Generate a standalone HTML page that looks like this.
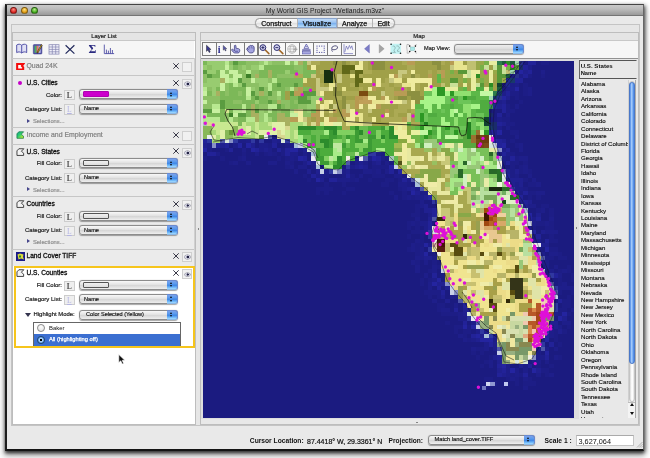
<!DOCTYPE html>
<html><head><meta charset="utf-8"><title>My World GIS</title><style>
*{box-sizing:border-box;margin:0;padding:0}
html,body{width:650px;height:458px;overflow:hidden;background:#fff}
body{will-change:transform;font-family:"Liberation Sans",sans-serif;font-size:7px;color:#111;position:relative}
.a{position:absolute}
.t{position:absolute;white-space:nowrap;line-height:1}
#win{left:5.3px;top:4px;width:638.7px;height:447px;background:#e9e9e9;border-left:2px solid #1e1e1e;border-right:1px solid #666;border-bottom:2.4px solid #141414;border-top:1px solid #444;box-shadow:0 2px 3px rgba(0,0,0,.6),0 4px 6px 1px rgba(0,0,0,.35),2px 1px 4px rgba(0,0,0,.3)}
#tb{left:7px;top:5px;width:636px;height:11px;background:linear-gradient(#cacaca,#bcbcbc 40%,#999);border-bottom:1px solid #747474}
.lt{position:absolute;top:7px;width:7px;height:7px;border-radius:50%;border:.5px solid rgba(0,0,0,.45)}
.sep{position:absolute;left:12px;width:183px;height:1px;background:#c6c6c6}
.lab{position:absolute;white-space:nowrap;line-height:1;font-size:6px;-webkit-text-stroke:.2px #222;color:#222;text-align:right;width:60px;left:2px}
.ttl{position:absolute;white-space:nowrap;line-height:1;font-size:6.6px;left:26.5px;color:#111;-webkit-text-stroke:.3px #111}
.ttlg{position:absolute;white-space:nowrap;line-height:1;font-size:6.9px;left:26.5px;color:#808080;-webkit-text-stroke:.2px #808080}
.lb{position:absolute;left:64.2px;width:10.4px;height:10.4px;background:#efefef;border:1px solid #cdcdcd;font-family:"Liberation Serif",serif;font-weight:bold;font-size:7.6px;line-height:9.4px;text-align:center;color:#505050}
.lb.dim{color:#b4b4e4;text-decoration:underline;font-weight:normal}
.dd{position:absolute;left:79px;width:99px;height:10px;border-radius:3px;border:1px solid #8c8c8c;background:linear-gradient(#f8f8f8,#e0e0e0 50%,#d6d6d6 55%,#eee);box-shadow:0 .5px 1px rgba(0,0,0,.35)}
.dd i{position:absolute;right:-1px;top:-1px;width:11px;height:10px;border-radius:0 3px 3px 0;background:linear-gradient(#7aa2ea,#5e9cee 30%,#4088e6 55%,#74bcfa 82%,#a4dcff);border:1px solid #6a8ad0;border-bottom-color:#8ab8e8;border-left:0}
.dd i:before{content:"";position:absolute;left:3.2px;top:1.4px;border:1.8px solid transparent;border-top:0;border-bottom:2.3px solid #0a0a0a}
.dd i:after{content:"";position:absolute;left:3.2px;top:4.7px;border:1.8px solid transparent;border-bottom:0;border-top:2.3px solid #0a0a0a}
.dd span{position:absolute;left:4px;top:1.6px;font-size:5.6px;-webkit-text-stroke:.15px #111;line-height:1;white-space:nowrap;color:#111}
.sw{position:absolute;left:3.3px;top:1.2px;width:25.3px;height:5.9px;border:1px solid #555;border-radius:1px;background:linear-gradient(#f0f0f0,#ddd)}
.sel{position:absolute;left:33px;font-size:5.8px;line-height:1;color:#909090;-webkit-text-stroke:.2px #909090;white-space:nowrap}
.tri{position:absolute;left:26.6px;width:0;height:0;border:2.9px solid transparent;border-right:0;border-left:3.8px solid #44448a}
.x{position:absolute;left:173px;width:6px;height:6px}
.cb{position:absolute;left:182px;width:10px;height:10px;background:#f1f1f1;border:1px solid #cfcfcf}
.eye{position:absolute;left:1.6px;top:2.4px;width:5.4px;height:3.6px;border-radius:50%;background:radial-gradient(circle at 55% 50%,#224 0,#224 28%,#99a 36%,#dde 60%);box-shadow:0 0 0 .5px #778}
.st{position:absolute;left:581px;font-size:6.1px;line-height:1;white-space:nowrap;color:#111;-webkit-text-stroke:.15px #111}
.tbt{position:absolute;top:42.2px;width:14.95px;height:13.6px;border:1px solid #7c7c7c;background:#f8f8f8}
</style></head><body>
<div class="a" id="win"></div><div class="a" id="tb"></div>
<div class="lt" style="left:10.3px;background:radial-gradient(circle at 50% 30%,#ff8a80,#d8201c 70%)"></div>
<div class="lt" style="left:20.8px;background:radial-gradient(circle at 50% 30%,#ffe27a,#e09a10 70%)"></div>
<div class="lt" style="left:31.2px;background:radial-gradient(circle at 50% 30%,#b6ee8a,#3ea818 70%)"></div>
<div class="t" style="left:0;width:650px;text-align:center;top:7.6px;font-size:6.8px;color:#222">My World GIS Project "Wetlands.m3vz"</div>
<div class="a" style="left:11px;top:24px;width:629px;height:402px;border:1px solid #c4c4c4;background:#e6e6e6"></div>
<div class="a" style="left:255px;top:18.1px;width:140px;height:9.6px;border-radius:4.5px;border:1px solid #989898;background:linear-gradient(#fcfcfc,#ececec 50%,#e0e0e0 55%,#f4f4f4);box-shadow:0 .5px 1px rgba(0,0,0,.3)"></div>
<div class="a" style="left:297px;top:18.1px;width:40px;height:9.6px;border:1px solid #8aa4cc;border-left-color:#90a8d0;border-right-color:#90a8d0;background:linear-gradient(#c2dcf8,#92bef0 50%,#7ab0ee 55%,#b4dcfc)"></div>
<div class="a" style="left:296.5px;top:19.1px;width:1px;height:7.6px;background:#b4b4b4"></div>
<div class="a" style="left:336.5px;top:19.1px;width:1px;height:7.6px;background:#b4b4b4"></div>
<div class="a" style="left:371.5px;top:19.1px;width:1px;height:7.6px;background:#b4b4b4"></div>
<div class="t" style="left:246.39999999999998px;width:60px;text-align:center;top:20.6px;font-size:7.1px;-webkit-text-stroke:.25px #111;color:#111">Construct</div>
<div class="t" style="left:287px;width:60px;text-align:center;top:20.6px;font-size:7.1px;-webkit-text-stroke:.25px #111;color:#111">Visualize</div>
<div class="t" style="left:324.6px;width:60px;text-align:center;top:20.6px;font-size:7.1px;-webkit-text-stroke:.25px #111;color:#111">Analyze</div>
<div class="t" style="left:353.5px;width:60px;text-align:center;top:20.6px;font-size:7.1px;-webkit-text-stroke:.25px #111;color:#111">Edit</div>
<div class="a" style="left:12px;top:32px;width:184px;height:393px;border:1px solid #bdbdbd;background:#fff"></div>
<div class="a" style="left:13px;top:33px;width:182px;height:7.5px;background:#e4e4e4;border-bottom:1px solid #c8c8c8"></div>
<div class="t" style="left:13px;width:182px;text-align:center;top:34px;font-size:5.9px;-webkit-text-stroke:.2px #222;color:#222">Layer List</div>
<div class="a" style="left:13px;top:40.5px;width:181px;height:17px;background:#f6f6f6"></div>
<div class="a" style="left:200px;top:32px;width:439px;height:393px;border:1px solid #bdbdbd;background:#e8e8e8"></div>
<div class="a" style="left:201px;top:33px;width:437px;height:7.5px;background:#e4e4e4;border-bottom:1px solid #c8c8c8"></div>
<div class="t" style="left:389px;width:60px;text-align:center;top:34px;font-size:5.9px;-webkit-text-stroke:.2px #222;color:#222">Map</div>
<div class="a" style="left:201px;top:40.5px;width:437px;height:17px;background:#f6f6f6"></div>
<svg class="a" style="left:14px;top:42px;width:110px;height:15px" viewBox="0 0 110 15">
<g fill="#e0e0f4" stroke="#4444a0" stroke-width=".9">
<path d="M2.700 3C4.200 1.900 6.200 1.900 7.700 3.300 9.200 1.900 11.200 1.900 12.700 3V10.600C11.200 9.600 9.200 9.600 7.700 11 6.200 9.600 4.200 9.600 2.700 10.600Z"/><path d="M7.700 3.300V11"/>
</g>
<rect x="19.300" y="2.600" width="8.600" height="9.400" rx=".8" fill="#5454ac" stroke="#33337a" stroke-width=".5"/><rect x="20.600" y="3.800" width="2" height="7" fill="#48b060"/><rect x="22.600" y="3.800" width="2" height="7" fill="#e87860"/><rect x="24.600" y="3.800" width="2" height="7" fill="#c8c8f0"/><path d="M27.200 2.600 23.400 9.800 23 11.200 24.300 10.400 28.200 3.300Z" fill="#f0c020" stroke="#111" stroke-width=".55"/>
<g stroke="#8484b0" stroke-width=".7" fill="#f0f0fa"><rect x="35" y="2.700" width="10" height="9.400"/><path d="M35 5h10M35 7.400h10M35 9.800h10M38.300 2.700v9.400M41.700 2.700v9.400" fill="none"/></g>
<path d="M51.600 3.200 60.400 11.600M60.400 3.200 51.600 11.600" stroke="#222a5c" stroke-width="1.200" fill="none"/>
<g stroke="#4444a0" stroke-width=".85" fill="none"><path d="M90.300 2.600v9h9.800M92.400 11.600v-4M94.400 11.600v-3M96.400 11.600v-5.600M98.400 11.600v-3.600"/></g>
<text x="74.600" y="11" font-family="Liberation Serif,serif" font-weight="bold" font-size="12" fill="#2a2a80">Σ</text>
</svg>
<div class="a" style="left:13px;top:58px;width:181px;height:208px;background:#ebebeb"></div>
<div class="sep" style="top:57.5px"></div>
<div class="sep" style="top:75.3px"></div>
<div class="sep" style="top:127.3px"></div>
<div class="sep" style="top:144px"></div>
<div class="sep" style="top:196.4px"></div>
<div class="sep" style="top:248.5px"></div>
<div class="a" style="left:194px;top:58px;width:1px;height:290px;background:#d0d0d0"></div>
<svg class="a" style="left:16px;top:62.6px;width:8.500px;height:7.500px" viewBox="0 0 9 8"><path d="M1.200 1H7.800L6.300 3.100 7.600 4.600V7H1.200Z" fill="#fff" stroke="#f40c0c" stroke-width="2.200"/></svg>
<div class="ttlg" style="top:62.6px">Quad 24K</div>
<svg class="x" style="top:63px" viewBox="0 0 6 6"><path d="M.3.3 5.7 5.7M5.7.3.3 5.7" stroke="#223" stroke-width=".9" fill="none"/></svg>
<div class="cb" style="top:62px"></div>
<div class="a" style="left:18px;top:80.800px;width:4px;height:4px;border-radius:50%;background:#c400c8"></div>
<div class="ttl" style="top:80.3px">U.S. Cities</div>
<svg class="x" style="top:80px" viewBox="0 0 6 6"><path d="M.3.3 5.7 5.7M5.7.3.3 5.7" stroke="#223" stroke-width=".9" fill="none"/></svg>
<div class="cb" style="top:79px"><b class=eye></b></div>
<div class="lab" style="top:92px">Color:</div>
<div class="lb" style="top:90px">L</div>
<div class="dd" style="top:89.3px;left:79px;width:99px"><b class="sw" style="background:#cc00cc;border-color:#b000b0"></b><i></i></div>
<div class="lab" style="top:106.400px">Category List:</div>
<div class="lb dim" style="top:104.3px">L</div>
<div class="dd" style="top:103.8px;left:79px;width:99px"><span style="left:4px">Name</span><i></i></div>
<div class="tri" style="top:118.6px"></div><div class="sel" style="top:119px">Selections...</div>
<svg class="a" style="left:16.400px;top:131.400px;width:8.400px;height:8px" viewBox="0 0 9 8.5"><defs><linearGradient id="gi" x1="0" y1="0" x2="1" y2="1"><stop offset="0" stop-color="#10a090"/><stop offset=".45" stop-color="#30d070"/><stop offset="1" stop-color="#e8f020"/></linearGradient></defs><path d="M3 .8H8.200L5.600 3.400 8 5.400V7.800H1V3Z" fill="url(#gi)" stroke="#187848" stroke-width=".8" stroke-linejoin="round"/></svg>
<div class="ttlg" style="top:132.200px">Income and Employment</div>
<svg class="x" style="top:131.5px" viewBox="0 0 6 6"><path d="M.3.3 5.7 5.7M5.7.3.3 5.7" stroke="#223" stroke-width=".9" fill="none"/></svg>
<div class="cb" style="top:130.5px"></div>
<svg class="a" style="left:16.200px;top:147.9px;width:8.600px;height:8.100px" viewBox="0 0 9 8.5"><path d="M3 .8H8.200L5.600 3.400 8 5.400V7.800H1V3Z" fill="#f4f4f4" stroke="#333" stroke-width=".95" stroke-linejoin="round"/></svg>
<div class="ttl" style="top:148.6px">U.S. States</div>
<svg class="x" style="top:148.2px" viewBox="0 0 6 6"><path d="M.3.3 5.7 5.7M5.7.3.3 5.7" stroke="#223" stroke-width=".9" fill="none"/></svg>
<div class="cb" style="top:147.89999999999998px"><b class=eye></b></div>
<div class="lab" style="top:160.39999999999998px">Fill Color:</div>
<div class="lb" style="top:159.0px">L</div>
<div class="dd" style="top:158.3px;left:79px;width:99px"><b class="sw"></b><i></i></div>
<div class="lab" style="top:174.7px">Category List:</div>
<div class="lb" style="top:173.1px">L</div>
<div class="dd" style="top:172.6px;left:79px;width:99px"><span style="left:4px">Name</span><i></i></div>
<div class="tri" style="top:187.2px"></div><div class="sel" style="top:187.6px">Selections...</div>
<svg class="a" style="left:16.200px;top:200.4px;width:8.600px;height:8.100px" viewBox="0 0 9 8.5"><path d="M3 .8H8.200L5.600 3.400 8 5.400V7.800H1V3Z" fill="#f4f4f4" stroke="#333" stroke-width=".95" stroke-linejoin="round"/></svg>
<div class="ttl" style="top:201.1px">Countries</div>
<svg class="x" style="top:200.7px" viewBox="0 0 6 6"><path d="M.3.3 5.7 5.7M5.7.3.3 5.7" stroke="#223" stroke-width=".9" fill="none"/></svg>
<div class="cb" style="top:200.39999999999998px"><b class=eye></b></div>
<div class="lab" style="top:212.89999999999998px">Fill Color:</div>
<div class="lb" style="top:211.5px">L</div>
<div class="dd" style="top:210.8px;left:79px;width:99px"><b class="sw"></b><i></i></div>
<div class="lab" style="top:227.2px">Category List:</div>
<div class="lb dim" style="top:225.6px">L</div>
<div class="dd" style="top:225.1px;left:79px;width:99px"><span style="left:4px">Name</span><i></i></div>
<div class="tri" style="top:239.4px"></div><div class="sel" style="top:239.8px">Selections...</div>
<svg class="a" style="left:16px;top:251.5px;width:9px;height:9px" viewBox="0 0 9 9"><rect width="9" height="9" fill="#1a1a88"/><path d="M1.5 2.5 4 1.5 7.5 2.5 7 5 8 7.5 5 6.5 2.5 7.5Z" fill="#d8d840"/><path d="M3 3.5h2v2H3z" fill="#2a8a2a"/></svg>
<div class="ttl" style="top:252.8px">Land Cover TIFF</div>
<svg class="x" style="top:252.5px" viewBox="0 0 6 6"><path d="M.3.3 5.7 5.7M5.7.3.3 5.7" stroke="#223" stroke-width=".9" fill="none"/></svg>
<div class="cb" style="top:252px"><b class=eye></b></div>
<div class="a" style="left:13.5px;top:266px;width:181px;height:82px;border:2px solid #f6c51c;background:#fff"></div>
<svg class="a" style="left:16.200px;top:269.4px;width:8.600px;height:8.100px" viewBox="0 0 9 8.5"><path d="M3 .8H8.200L5.600 3.400 8 5.400V7.800H1V3Z" fill="#f4f4f4" stroke="#333" stroke-width=".95" stroke-linejoin="round"/></svg>
<div class="ttl" style="top:270.09999999999997px">U.S. Counties</div>
<svg class="x" style="top:269.7px" viewBox="0 0 6 6"><path d="M.3.3 5.7 5.7M5.7.3.3 5.7" stroke="#223" stroke-width=".9" fill="none"/></svg>
<div class="cb" style="top:269.4px"><b class=eye></b></div>
<div class="lab" style="top:281.9px">Fill Color:</div>
<div class="lb" style="top:280.5px">L</div>
<div class="dd" style="top:279.8px;left:79px;width:99px"><b class="sw"></b><i></i></div>
<div class="lab" style="top:296.2px">Category List:</div>
<div class="lb dim" style="top:294.59999999999997px">L</div>
<div class="dd" style="top:294.1px;left:79px;width:99px"><span style="left:4px">Name</span><i></i></div>
<div class="a" style="left:25.2px;top:313.400px;width:0;height:0;border:3.2px solid transparent;border-bottom:0;border-top:4px solid #34344e"></div>
<div class="t" style="left:33.5px;top:312.4px;font-size:5.95px;-webkit-text-stroke:.2px #222;color:#222">Highlight Mode:</div>
<div class="dd" style="top:309.7px;left:79px;width:99px"><span style="left:6px">Color Selected (Yellow)</span><i></i></div>
<div class="a" style="left:33px;top:322px;width:148px;height:24px;border:1px solid #666;background:#fff"></div>
<div class="a" style="left:34px;top:334px;width:146px;height:11.5px;background:#3b6fd1"></div>
<div class="a" style="left:37.3px;top:324.2px;width:7.8px;height:7.8px;border-radius:50%;border:1px solid #888;background:radial-gradient(circle at 50% 30%,#fff,#ddd)"></div>
<div class="a" style="left:37.3px;top:335.8px;width:7.8px;height:7.8px;border-radius:50%;border:1px solid #246;background:radial-gradient(circle at 50% 50%,#000 0,#000 22%,#bfe0ff 30%,#5a9ae8 70%)"></div>
<div class="t" style="left:49px;top:325.6px;font-size:5.9px;color:#111">Baker</div>
<div class="t" style="left:49px;top:337.2px;font-size:5.75px;color:#fff;-webkit-text-stroke:.25px #fff">All (highlighting off)</div>
<svg class="a" style="left:118px;top:354px;width:8px;height:11px" viewBox="0 0 8 11"><path d="M.8.5V8.6L2.8 6.8 4.2 10 5.6 9.4 4.2 6.3H6.8Z" fill="#111" stroke="#fff" stroke-width=".6"/></svg>
<div class="a" style="left:197.5px;top:228px;width:0;height:0;border:1.3px solid transparent;border-left:1.8px solid #222"></div>
<div class="tbt" style="left:201.70px"></div>
<div class="tbt" style="left:215.65px"></div>
<div class="tbt" style="left:229.60px"></div>
<div class="tbt" style="left:243.55px"></div>
<div class="tbt" style="left:257.50px"></div>
<div class="tbt" style="left:271.45px"></div>
<div class="tbt" style="left:285.40px"></div>
<div class="tbt" style="left:299.35px"></div>
<div class="tbt" style="left:313.30px"></div>
<div class="tbt" style="left:327.25px"></div>
<div class="tbt" style="left:341.20px"></div>
<svg class="a" style="left:0;top:0;width:650px;height:458px" viewBox="0 0 650 458">
<path transform="translate(206.5 45.2) scale(0.88)" d="M0 0V7L1.7 5.4 3 8.2 4.2 7.7 3 5H5.2Z" fill="#3c3c94" stroke="#111" stroke-width=".5"/>
<text x="217.84999999999997" y="53.4" font-family="Liberation Serif,serif" font-weight="bold" font-size="10" fill="#2a2a90">i</text>
<path transform="translate(223.24999999999997 45.4) scale(0.68)" d="M0 0V7L1.7 5.4 3 8.2 4.2 7.7 3 5H5.2Z" fill="#5a5ab0" stroke="#111" stroke-width=".5"/>
<path d="M234.4 45.6q.8-.8 1.600 0v2.600l2.600.5q1.200.3 1.200 1.500l-.3 1.600q-.3 1.200-1.600 1.200h-2.800q-1.200 0-1.900-.9l-1.500-1.900q-.3-.9.6-1 .9 0 1.500.9l.6.7z" fill="#a4a4e0" stroke="#383878" stroke-width=".7"/><path d="M235 51.300h3" stroke="#383878" stroke-width=".6"/>
<path d="M247.400 48.800q-.1-1.500 1-1.500.1-1.500 1.400-1.300.5-1.200 1.700-.5 1.200-.6 1.700.7 1-.1 1 1.200v2.600q0 1.600-1 2.400-1 .7-2.400.6-1.600-.1-2.500-1.300l-1.600-2.300q-.2-.8.5-.9.600 0 1.200.8z" fill="#a4a4e0" stroke="#383878" stroke-width=".7"/><path d="M249.6 46.600v2M251.400 46v2.400M253 46.800v2" stroke="#50508c" stroke-width=".5"/>
<path d="M265.3 50 268.9 53.6" stroke="#a06828" stroke-width="1.6" stroke-linecap="round"/>
<circle cx="262.9" cy="47.6" r="2.9" fill="#d0d0ec" stroke="#2c2c70" stroke-width="1"/>
<path d="M261.4 47.6h3M262.9 46.100v3" stroke="#222260" stroke-width=".9"/>
<path d="M279.25 50 282.84999999999997 53.6" stroke="#a06828" stroke-width="1.6" stroke-linecap="round"/>
<circle cx="276.84999999999997" cy="47.6" r="2.9" fill="#d0d0ec" stroke="#2c2c70" stroke-width="1"/>
<path d="M275.34999999999997 47.6h3" stroke="#222260" stroke-width=".9"/>
<g fill="none" stroke="#b0b0b0" stroke-width=".7"><circle cx="292.0" cy="49" r="4.3"/><ellipse cx="292.0" cy="49" rx="2" ry="4.3"/><path d="M287.7 49h8.600M288.4 46.600h7.200M288.4 51.400h7.200"/></g><path d="M293.4 49.300h4M295.4 47.300v4" stroke="#a0a0a0" stroke-width="1"/>
<path d="M306.34999999999997 44 308.74999999999994 48.400H303.95Z" fill="#e8e8f8" stroke="#4a4aa0" stroke-width=".7"/><path d="M305.34999999999997 46.600h2" stroke="#4a4aa0" stroke-width=".6"/><rect x="302.15" y="49.400" width="8.400" height="1.300" fill="#4a4aa0"/><rect x="302.34999999999997" y="51.600" width="8" height="2.400" fill="#a8a8e0" stroke="#4a4aa0" stroke-width=".5"/>
<rect x="316.5" y="45.6" width="1" height="1" fill="#3c3c94"/><rect x="316.5" y="51.9" width="1" height="1" fill="#3c3c94"/><rect x="318.9" y="45.6" width="1" height="1" fill="#3c3c94"/><rect x="318.9" y="51.9" width="1" height="1" fill="#3c3c94"/><rect x="321.3" y="45.6" width="1" height="1" fill="#3c3c94"/><rect x="321.3" y="51.9" width="1" height="1" fill="#3c3c94"/><rect x="323.7" y="45.6" width="1" height="1" fill="#3c3c94"/><rect x="323.7" y="51.9" width="1" height="1" fill="#3c3c94"/><rect x="316.5" y="47.7" width="1" height="1" fill="#3c3c94"/><rect x="323.7" y="47.7" width="1" height="1" fill="#3c3c94"/><rect x="316.5" y="49.8" width="1" height="1" fill="#3c3c94"/><rect x="323.7" y="49.8" width="1" height="1" fill="#3c3c94"/>
<g fill="none" stroke="#2c2c60" stroke-width=".7"><ellipse cx="334.65" cy="47.800" rx="3" ry="1.900" transform="rotate(-15 334.65 47.800)"/><path d="M332.05 48.800q-.9 1.500.5 2.900"/></g>
<g fill="none" stroke="#6a6ab4" stroke-width=".7"><path d="M344.0 44.200v9.400h9"/><path d="M344.8 52 346.4 46 347.8 49.400 349.4 45.400 350.59999999999997 48.400 351.8 45.800 352.8 50"/></g>
<path d="M369.4 44.600V53L364.500 48.800Z" fill="#7c7cc6" stroke="#5a5aac" stroke-width=".4"/>
<path d="M379.2 44.600V53L384.200 48.800Z" fill="#a4a4a4" stroke="#8c8c8c" stroke-width=".4"/>
<rect x="390.6" y="43.800" width="10.400" height="10" fill="#c2f3f3"/><g fill="none" stroke="#7a9c9c" stroke-width=".6"><path d="M392.600 46.200q1.600-.8 2.400.6t-.6 2.600q-1 1.400.4 2.600M396.400 46q2-.6 2.800 1t-.8 2.200q-1.400.4-.8 2.200h1.800M392.400 52.400h3.400"/></g><g fill="#111"><circle cx="391.100" cy="44.300" r=".8"/><circle cx="400.500" cy="44.300" r=".8"/><circle cx="391.100" cy="53.300" r=".8"/><circle cx="400.500" cy="53.300" r=".8"/></g>
<g fill="none" stroke="#9a9a9a" stroke-width=".6"><path d="M407 44.400q2.600-.6 2.600 1.600M407 44.400q-.6 2.600 0 5.200t0 3.600M407 53.200q2.600.6 2.600-1.600M416.400 44 415.400 46M416.400 53.600 415.400 51.600"/></g><rect x="410.500" y="47" width="4.100" height="3.500" fill="#a8e8e8" stroke="#78b0b0" stroke-width=".4"/><g fill="#111"><circle cx="409.700" cy="46.100" r=".8"/><circle cx="415.400" cy="46.100" r=".8"/><circle cx="409.700" cy="51.500" r=".8"/><circle cx="415.400" cy="51.500" r=".8"/></g>
</svg>
<div class="t" style="left:424px;top:46px;font-size:5.6px;-webkit-text-stroke:.2px #222;color:#222">Map View:</div>
<div class="dd" style="top:43.8px;left:453.5px;width:70px;height:10.5px;background:linear-gradient(#eee,#dcdcdc 50%,#d4d4d4 55%,#e6e6e6)"><i></i></div>
<div class="a" style="left:201px;top:57.6px;width:437px;height:1.3px;background:#929292"></div>
<div class="a" style="left:201px;top:58.9px;width:378px;height:360px;background:#dedede"></div>
<svg class="a" style="left:0;top:0;width:650px;height:458px" viewBox="0 0 650 458" shape-rendering="crispEdges">
<rect x="203.0" y="61.0" width="371.0" height="356.5" fill="#1b1b80"/>
<path fill="#7cb858" d="M203 61h4v4h-4zM238 61h4v4h-4zM242 61h4v4h-4zM303 61h4v4h-4zM233 65h5v5h-5zM264 65h4v5h-4zM268 65h4v5h-4zM272 65h5v5h-5zM277 65h4v5h-4zM281 65h4v5h-4zM285 65h5v5h-5zM290 65h4v5h-4zM303 65h4v5h-4zM216 70h4v4h-4zM259 70h5v4h-5zM264 70h4v4h-4zM272 70h5v4h-5zM277 70h4v4h-4zM281 70h4v4h-4zM290 70h4v4h-4zM294 70h4v4h-4zM303 70h4v4h-4zM307 70h4v4h-4zM311 70h5v4h-5zM212 74h4v4h-4zM216 74h4v4h-4zM259 74h5v4h-5zM264 74h4v4h-4zM272 74h5v4h-5zM303 74h4v4h-4zM307 74h4v4h-4zM277 78h4v5h-4zM281 78h4v5h-4zM285 78h5v5h-5zM290 78h4v5h-4zM294 78h4v5h-4zM298 78h5v5h-5zM229 83h4v4h-4zM272 83h5v4h-5zM281 83h4v4h-4zM285 83h5v4h-5zM290 83h4v4h-4zM298 83h5v4h-5zM216 87h4v4h-4zM229 87h4v4h-4zM233 87h5v4h-5zM238 87h4v4h-4zM242 87h4v4h-4zM272 87h5v4h-5zM277 87h4v4h-4zM281 87h4v4h-4zM303 87h4v4h-4zM307 87h4v4h-4zM207 91h5v5h-5zM220 91h5v5h-5zM229 91h4v5h-4zM233 91h5v5h-5zM242 91h4v5h-4zM281 91h4v5h-4zM220 96h5v4h-5zM225 96h4v4h-4zM229 96h4v4h-4zM233 96h5v4h-5zM238 96h4v4h-4zM242 96h4v4h-4zM251 96h4v4h-4zM259 96h5v4h-5zM264 96h4v4h-4zM281 96h4v4h-4zM290 96h4v4h-4zM294 96h4v4h-4zM307 96h4v4h-4zM225 100h4v4h-4zM229 100h4v4h-4zM242 100h4v4h-4zM246 100h5v4h-5zM251 100h4v4h-4zM259 100h5v4h-5zM264 100h4v4h-4zM272 100h5v4h-5zM290 100h4v4h-4zM225 104h4v5h-4zM229 104h4v5h-4zM233 104h5v5h-5zM238 104h4v5h-4zM246 104h5v5h-5zM255 104h4v5h-4zM281 104h4v5h-4zM290 104h4v5h-4zM294 104h4v5h-4zM220 109h5v4h-5zM229 109h4v4h-4zM246 109h5v4h-5zM272 109h5v4h-5zM281 109h4v4h-4zM285 109h5v4h-5zM311 109h5v4h-5zM207 113h5v4h-5zM212 113h4v4h-4zM216 113h4v4h-4zM220 113h5v4h-5zM246 113h5v4h-5zM268 113h4v4h-4zM272 113h5v4h-5zM285 113h5v4h-5zM220 117h5v5h-5zM238 117h4v5h-4zM242 117h4v5h-4zM272 117h5v5h-5zM238 122h4v4h-4z"/>
<path fill="#98cc70" d="M207 61h5v4h-5zM212 61h4v4h-4zM216 61h4v4h-4zM220 61h5v4h-5zM259 61h5v4h-5zM268 61h4v4h-4zM203 65h4v5h-4zM212 65h4v5h-4zM216 65h4v5h-4zM220 65h5v5h-5zM229 65h4v5h-4zM242 65h4v5h-4zM251 65h4v5h-4zM255 65h4v5h-4zM207 70h5v4h-5zM212 70h4v4h-4zM285 70h5v4h-5zM207 78h5v5h-5zM212 78h4v5h-4zM216 78h4v5h-4zM255 78h4v5h-4zM259 78h5v5h-5zM264 78h4v5h-4zM203 83h4v4h-4zM207 83h5v4h-5zM212 83h4v4h-4zM216 83h4v4h-4zM238 83h4v4h-4zM259 83h5v4h-5zM264 83h4v4h-4zM212 87h4v4h-4zM251 87h4v4h-4zM212 91h4v5h-4zM277 96h4v4h-4zM311 96h5v4h-5zM316 96h4v4h-4zM320 96h4v4h-4zM255 100h4v4h-4zM311 100h5v4h-5zM307 104h4v5h-4zM311 104h5v5h-5zM259 109h5v4h-5zM307 109h4v4h-4zM259 113h5v4h-5zM259 117h5v5h-5zM268 117h4v5h-4z"/>
<path fill="#b8e890" d="M225 61h4v4h-4zM264 61h4v4h-4zM294 61h4v4h-4zM259 65h5v5h-5zM246 70h5v4h-5zM229 78h4v5h-4zM272 78h5v5h-5zM233 83h5v4h-5zM268 83h4v4h-4zM203 87h4v4h-4zM268 87h4v4h-4zM290 87h4v4h-4zM277 91h4v5h-4zM246 96h5v4h-5zM212 104h4v5h-4zM216 104h4v5h-4zM242 104h4v5h-4zM268 104h4v5h-4zM272 104h5v5h-5zM233 109h5v4h-5zM238 109h4v4h-4zM268 109h4v4h-4zM290 109h4v4h-4zM203 113h4v4h-4zM264 113h4v4h-4zM203 117h4v5h-4zM207 117h5v5h-5zM212 117h4v5h-4zM216 117h4v5h-4zM229 117h4v5h-4zM246 117h5v5h-5zM251 117h4v5h-4zM264 117h4v5h-4z"/>
<path fill="#8cc064" d="M229 61h4v4h-4zM246 61h5v4h-5zM251 61h4v4h-4zM255 61h4v4h-4zM272 61h5v4h-5zM277 61h4v4h-4zM281 61h4v4h-4zM290 61h4v4h-4zM207 65h5v5h-5zM238 65h4v5h-4zM246 65h5v5h-5zM294 65h4v5h-4zM298 65h5v5h-5zM225 70h4v4h-4zM238 70h4v4h-4zM242 70h4v4h-4zM251 70h4v4h-4zM255 70h4v4h-4zM298 70h5v4h-5zM203 74h4v4h-4zM229 74h4v4h-4zM242 74h4v4h-4zM251 74h4v4h-4zM277 74h4v4h-4zM281 74h4v4h-4zM285 74h5v4h-5zM290 74h4v4h-4zM203 78h4v5h-4zM242 78h4v5h-4zM246 78h5v5h-5zM268 78h4v5h-4zM225 83h4v4h-4zM246 83h5v4h-5zM251 83h4v4h-4zM255 83h4v4h-4zM207 87h5v4h-5zM225 87h4v4h-4zM255 87h4v4h-4zM264 87h4v4h-4zM285 87h5v4h-5zM225 91h4v5h-4zM238 91h4v5h-4zM255 91h4v5h-4zM264 91h4v5h-4zM272 91h5v5h-5zM203 96h4v4h-4zM207 96h5v4h-5zM212 96h4v4h-4zM216 96h4v4h-4zM268 96h4v4h-4zM272 96h5v4h-5zM207 100h5v4h-5zM212 100h4v4h-4zM216 100h4v4h-4zM233 100h5v4h-5zM238 100h4v4h-4zM281 100h4v4h-4zM285 100h5v4h-5zM294 100h4v4h-4zM203 104h4v5h-4zM207 104h5v5h-5zM259 104h5v5h-5zM264 104h4v5h-4zM285 104h5v5h-5zM298 104h5v5h-5zM303 104h4v5h-4zM264 109h4v4h-4zM277 109h4v4h-4zM303 109h4v4h-4zM225 113h4v4h-4zM303 113h4v4h-4zM307 113h4v4h-4zM225 117h4v5h-4zM233 117h5v5h-5z"/>
<path fill="#5a9c40" d="M233 61h5v4h-5zM203 70h4v4h-4zM207 74h5v4h-5zM238 78h4v5h-4zM242 83h4v4h-4zM277 83h4v4h-4zM294 83h4v4h-4zM259 87h5v4h-5zM251 91h4v5h-4zM268 91h4v5h-4zM290 91h4v5h-4zM303 91h4v5h-4zM307 91h4v5h-4zM311 91h5v5h-5zM255 96h4v4h-4zM298 96h5v4h-5zM303 96h4v4h-4zM220 100h5v4h-5zM268 100h4v4h-4zM298 100h5v4h-5zM303 100h4v4h-4zM307 100h4v4h-4zM220 104h5v5h-5zM277 104h4v5h-4zM203 109h4v4h-4zM207 109h5v4h-5zM255 109h4v4h-4zM238 113h4v4h-4zM242 113h4v4h-4z"/>
<path fill="#c8f0a0" d="M285 61h5v4h-5zM225 65h4v5h-4zM220 70h5v4h-5zM229 70h4v4h-4zM233 70h5v4h-5zM220 74h5v4h-5zM225 74h4v4h-4zM233 74h5v4h-5zM238 74h4v4h-4zM225 78h4v5h-4zM233 78h5v5h-5zM251 78h4v5h-4zM220 83h5v4h-5zM220 87h5v4h-5zM246 87h5v4h-5zM203 91h4v5h-4zM246 91h5v5h-5zM203 100h4v4h-4zM212 109h4v4h-4zM216 109h4v4h-4zM242 109h4v4h-4zM233 113h5v4h-5zM290 113h4v4h-4zM294 113h4v4h-4z"/>
<path fill="#a8b060" d="M298 61h5v4h-5zM268 70h4v4h-4zM255 74h4v4h-4zM268 74h4v4h-4zM220 78h5v5h-5zM294 87h4v4h-4zM216 91h4v5h-4zM259 91h5v5h-5zM277 100h4v4h-4zM251 104h4v5h-4zM251 109h4v4h-4zM251 113h4v4h-4zM255 113h4v4h-4zM277 113h4v4h-4zM281 113h4v4h-4zM255 117h4v5h-4zM277 117h4v5h-4zM281 117h4v5h-4zM285 117h5v5h-5zM285 122h5v4h-5z"/>
<path fill="#c8c880" d="M307 61h4v4h-4zM450 65h4v5h-4zM398 70h4v4h-4zM402 70h5v4h-5zM311 74h5v4h-5zM337 74h5v4h-5zM398 74h4v4h-4zM316 78h4v5h-4zM337 78h5v5h-5zM389 78h5v5h-5zM316 83h4v4h-4zM316 87h4v4h-4zM320 87h4v4h-4zM324 87h5v4h-5zM316 91h4v5h-4zM381 91h4v5h-4zM402 100h5v4h-5zM333 104h4v5h-4zM346 104h4v5h-4zM346 109h4v4h-4zM368 109h4v4h-4zM407 113h4v4h-4zM303 117h4v5h-4zM407 117h4v5h-4zM363 122h5v4h-5zM368 122h4v4h-4z"/>
<path fill="#acaa54" d="M311 61h5v4h-5zM316 61h4v4h-4zM350 61h5v4h-5zM363 61h5v4h-5zM402 61h5v4h-5zM441 61h4v4h-4zM363 65h5v5h-5zM407 65h4v5h-4zM411 65h4v5h-4zM320 70h4v4h-4zM363 70h5v4h-5zM368 70h4v4h-4zM407 70h4v4h-4zM428 70h4v4h-4zM437 70h4v4h-4zM294 74h4v4h-4zM298 74h5v4h-5zM359 74h4v4h-4zM402 74h5v4h-5zM407 74h4v4h-4zM415 74h5v4h-5zM385 78h4v5h-4zM320 83h4v4h-4zM350 83h5v4h-5zM381 83h4v4h-4zM385 83h4v4h-4zM394 83h4v4h-4zM398 83h4v4h-4zM415 83h5v4h-5zM359 87h4v4h-4zM385 87h4v4h-4zM389 87h5v4h-5zM402 87h5v4h-5zM415 87h5v4h-5zM342 91h4v5h-4zM346 91h4v5h-4zM350 91h5v5h-5zM355 91h4v5h-4zM385 91h4v5h-4zM389 91h5v5h-5zM337 96h5v4h-5zM389 96h5v4h-5zM346 100h4v4h-4zM350 100h5v4h-5zM407 100h4v4h-4zM316 104h4v5h-4zM350 104h5v5h-5zM363 104h5v5h-5zM398 104h4v5h-4zM402 104h5v5h-5zM407 104h4v5h-4zM324 109h5v4h-5zM359 109h4v4h-4zM363 109h5v4h-5zM394 109h4v4h-4zM398 109h4v4h-4zM402 109h5v4h-5zM411 109h4v4h-4zM329 113h4v4h-4zM363 113h5v4h-5zM394 113h4v4h-4zM307 117h4v5h-4zM337 117h5v5h-5zM342 117h4v5h-4zM355 117h4v5h-4zM363 117h5v5h-5zM368 117h4v5h-4zM381 117h4v5h-4zM385 117h4v5h-4zM389 117h5v5h-5zM394 117h4v5h-4zM398 117h4v5h-4zM307 122h4v4h-4zM342 122h4v4h-4zM411 122h4v4h-4zM415 122h5v4h-5zM342 126h4v4h-4zM346 126h4v4h-4z"/>
<path fill="#a0a048" d="M320 61h4v4h-4zM324 61h5v4h-5zM329 61h4v4h-4zM337 61h5v4h-5zM346 61h4v4h-4zM355 61h4v4h-4zM368 61h4v4h-4zM385 61h4v4h-4zM389 61h5v4h-5zM394 61h4v4h-4zM398 61h4v4h-4zM415 61h5v4h-5zM420 61h4v4h-4zM424 61h4v4h-4zM428 61h4v4h-4zM445 61h5v4h-5zM463 61h4v4h-4zM307 65h4v5h-4zM316 65h4v5h-4zM320 65h4v5h-4zM324 65h5v5h-5zM329 65h4v5h-4zM333 65h4v5h-4zM337 65h5v5h-5zM368 65h4v5h-4zM385 65h4v5h-4zM389 65h5v5h-5zM394 65h4v5h-4zM398 65h4v5h-4zM402 65h5v5h-5zM415 65h5v5h-5zM420 65h4v5h-4zM424 65h4v5h-4zM428 65h4v5h-4zM432 65h5v5h-5zM441 65h4v5h-4zM445 65h5v5h-5zM489 65h4v5h-4zM316 70h4v4h-4zM333 70h4v4h-4zM337 70h5v4h-5zM372 70h4v4h-4zM376 70h5v4h-5zM381 70h4v4h-4zM385 70h4v4h-4zM389 70h5v4h-5zM394 70h4v4h-4zM415 70h5v4h-5zM420 70h4v4h-4zM424 70h4v4h-4zM432 70h5v4h-5zM454 70h4v4h-4zM316 74h4v4h-4zM320 74h4v4h-4zM333 74h4v4h-4zM342 74h4v4h-4zM346 74h4v4h-4zM363 74h5v4h-5zM368 74h4v4h-4zM372 74h4v4h-4zM376 74h5v4h-5zM381 74h4v4h-4zM385 74h4v4h-4zM420 74h4v4h-4zM424 74h4v4h-4zM432 74h5v4h-5zM493 74h4v4h-4zM307 78h4v5h-4zM311 78h5v5h-5zM320 78h4v5h-4zM333 78h4v5h-4zM342 78h4v5h-4zM346 78h4v5h-4zM350 78h5v5h-5zM372 78h4v5h-4zM381 78h4v5h-4zM402 78h5v5h-5zM432 78h5v5h-5zM493 78h4v5h-4zM303 83h4v4h-4zM307 83h4v4h-4zM311 83h5v4h-5zM324 83h5v4h-5zM337 83h5v4h-5zM342 83h4v4h-4zM346 83h4v4h-4zM359 83h4v4h-4zM363 83h5v4h-5zM368 83h4v4h-4zM389 83h5v4h-5zM420 83h4v4h-4zM424 83h4v4h-4zM432 83h5v4h-5zM437 83h4v4h-4zM458 83h5v4h-5zM467 83h4v4h-4zM484 83h5v4h-5zM493 83h4v4h-4zM311 87h5v4h-5zM337 87h5v4h-5zM346 87h4v4h-4zM350 87h5v4h-5zM355 87h4v4h-4zM363 87h5v4h-5zM376 87h5v4h-5zM381 87h4v4h-4zM394 87h4v4h-4zM398 87h4v4h-4zM407 87h4v4h-4zM420 87h4v4h-4zM467 87h4v4h-4zM493 87h4v4h-4zM285 91h5v5h-5zM324 91h5v5h-5zM329 91h4v5h-4zM368 91h4v5h-4zM372 91h4v5h-4zM376 91h5v5h-5zM420 91h4v5h-4zM285 96h5v4h-5zM324 96h5v4h-5zM329 96h4v4h-4zM333 96h4v4h-4zM346 96h4v4h-4zM350 96h5v4h-5zM376 96h5v4h-5zM394 96h4v4h-4zM407 96h4v4h-4zM320 100h4v4h-4zM333 100h4v4h-4zM337 100h5v4h-5zM337 104h5v5h-5zM381 104h4v5h-4zM385 104h4v5h-4zM389 104h5v5h-5zM394 104h4v5h-4zM337 109h5v4h-5zM355 109h4v4h-4zM372 109h4v4h-4zM376 109h5v4h-5zM381 109h4v4h-4zM389 109h5v4h-5zM407 109h4v4h-4zM324 113h5v4h-5zM333 113h4v4h-4zM337 113h5v4h-5zM368 113h4v4h-4zM372 113h4v4h-4zM376 113h5v4h-5zM381 113h4v4h-4zM389 113h5v4h-5zM398 113h4v4h-4zM402 113h5v4h-5zM411 113h4v4h-4zM311 117h5v5h-5zM320 117h4v5h-4zM376 117h5v5h-5zM411 117h4v5h-4zM372 122h4v4h-4zM376 122h5v4h-5zM381 122h4v4h-4zM385 122h4v4h-4z"/>
<path fill="#8c9040" d="M333 61h4v4h-4zM342 61h4v4h-4zM372 61h4v4h-4zM376 61h5v4h-5zM381 61h4v4h-4zM432 61h5v4h-5zM437 61h4v4h-4zM372 65h4v5h-4zM376 65h5v5h-5zM381 65h4v5h-4zM437 65h4v5h-4zM350 70h5v4h-5zM411 74h4v4h-4zM333 87h4v4h-4zM333 91h4v5h-4zM337 91h5v5h-5zM407 91h4v5h-4zM411 91h4v5h-4zM415 91h5v5h-5zM342 96h4v4h-4zM398 96h4v4h-4zM402 96h5v4h-5zM411 96h4v4h-4zM415 96h5v4h-5zM420 96h4v4h-4zM342 100h4v4h-4zM415 100h5v4h-5zM329 104h4v5h-4zM342 104h4v5h-4z"/>
<path fill="#f0eca0" d="M359 61h4v4h-4zM311 65h5v5h-5zM355 65h4v5h-4zM359 65h4v5h-4zM411 70h4v4h-4zM389 74h5v4h-5zM363 78h5v5h-5zM368 78h4v5h-4zM376 78h5v5h-5zM407 78h4v5h-4zM411 78h4v5h-4zM415 78h5v5h-5zM420 78h4v5h-4zM424 78h4v5h-4zM428 78h4v5h-4zM376 83h5v4h-5zM411 83h4v4h-4zM428 83h4v4h-4zM329 87h4v4h-4zM368 87h4v4h-4zM411 87h4v4h-4zM424 87h4v4h-4zM428 87h4v4h-4zM320 91h4v5h-4zM368 96h4v4h-4zM372 96h4v4h-4zM385 96h4v4h-4zM316 100h4v4h-4zM329 100h4v4h-4zM385 100h4v4h-4zM389 100h5v4h-5zM394 100h4v4h-4zM398 100h4v4h-4zM411 100h4v4h-4zM320 104h4v5h-4zM359 104h4v5h-4zM368 104h4v5h-4zM372 104h4v5h-4zM411 104h4v5h-4zM298 109h5v4h-5zM320 109h4v4h-4zM350 109h5v4h-5zM298 113h5v4h-5zM320 113h4v4h-4zM350 113h5v4h-5zM385 113h4v4h-4zM298 117h5v5h-5zM324 117h5v5h-5zM346 117h4v5h-4zM350 117h5v5h-5zM372 117h4v5h-4zM324 122h5v4h-5zM329 122h4v4h-4zM398 130h4v5h-4zM402 130h5v5h-5zM398 135h4v4h-4zM402 135h5v4h-5zM407 135h4v4h-4zM407 139h4v4h-4zM402 143h5v5h-5zM402 148h5v4h-5zM402 152h5v4h-5zM402 156h5v5h-5z"/>
<path fill="#b89c54" d="M407 61h4v4h-4zM411 61h4v4h-4zM450 61h4v4h-4zM441 70h4v4h-4zM394 74h4v4h-4zM428 74h4v4h-4zM441 74h4v4h-4zM372 83h4v4h-4zM298 87h5v4h-5zM372 87h4v4h-4zM294 91h4v5h-4zM298 91h5v5h-5zM394 91h4v5h-4zM398 91h4v5h-4zM402 91h5v5h-5zM381 96h4v4h-4zM376 104h5v5h-5zM316 109h4v4h-4zM333 109h4v4h-4zM342 109h4v4h-4zM385 109h4v4h-4zM311 113h5v4h-5zM316 113h4v4h-4zM342 113h4v4h-4zM346 113h4v4h-4zM290 117h4v5h-4zM294 117h4v5h-4zM316 117h4v5h-4zM329 117h4v5h-4zM333 117h4v5h-4zM402 117h5v5h-5zM316 122h4v4h-4z"/>
<path fill="#e8e490" d="M454 61h4v4h-4zM458 61h5v4h-5zM454 65h4v5h-4zM458 65h5v5h-5zM463 65h4v5h-4zM350 74h5v4h-5zM303 78h4v5h-4zM394 78h4v5h-4zM398 78h4v5h-4zM329 83h4v4h-4zM333 83h4v4h-4zM402 83h5v4h-5zM407 83h4v4h-4zM342 87h4v4h-4zM324 100h5v4h-5zM372 100h4v4h-4zM376 100h5v4h-5zM381 100h4v4h-4zM324 104h5v5h-5zM294 109h4v4h-4zM329 109h4v4h-4zM355 113h4v4h-4zM359 113h4v4h-4zM359 117h4v5h-4zM346 122h4v4h-4zM350 122h5v4h-5zM355 122h4v4h-4zM359 122h4v4h-4zM389 122h5v4h-5zM394 122h4v4h-4zM398 122h4v4h-4zM402 122h5v4h-5zM394 126h4v4h-4zM402 126h5v4h-5z"/>
<path fill="#c0c070" d="M467 61h4v4h-4zM471 61h5v4h-5zM467 65h4v5h-4zM471 65h5v5h-5zM506 70h4v4h-4zM441 83h4v4h-4z"/>
<path fill="#98a848" d="M476 61h4v4h-4zM480 61h4v4h-4zM476 65h4v5h-4zM445 70h5v4h-5zM480 70h4v4h-4zM484 70h5v4h-5zM493 70h4v4h-4zM445 74h5v4h-5zM450 74h4v4h-4zM454 74h4v4h-4zM458 74h5v4h-5zM480 74h4v4h-4zM484 74h5v4h-5zM441 78h4v5h-4zM445 78h5v5h-5zM458 78h5v5h-5zM467 78h4v5h-4zM476 78h4v5h-4zM484 78h5v5h-5zM502 78h4v5h-4zM445 83h5v4h-5z"/>
<path fill="#78b048" d="M484 61h5v4h-5zM480 65h4v5h-4zM506 65h4v5h-4zM450 70h4v4h-4zM463 78h4v5h-4zM480 78h4v5h-4zM458 87h5v4h-5z"/>
<path fill="#e8eca0" d="M489 61h4v4h-4zM493 61h4v4h-4zM471 70h5v4h-5zM476 70h4v4h-4zM489 70h4v4h-4zM463 74h4v4h-4zM471 74h5v4h-5zM489 74h4v4h-4zM471 78h5v5h-5zM489 78h4v5h-4zM463 83h4v4h-4zM471 83h5v4h-5zM445 87h5v4h-5zM450 87h4v4h-4zM454 87h4v4h-4zM471 87h5v4h-5zM484 87h5v4h-5z"/>
<path fill="#2c7c4c" d="M497 61h5v4h-5zM493 91h4v5h-4zM489 100h4v4h-4z"/>
<path fill="#1c5c3c" d="M502 61h4v4h-4zM510 61h5v4h-5zM506 74h4v4h-4zM497 87h5v4h-5z"/>
<path fill="#2c8c24" d="M506 61h4v4h-4zM510 65h5v5h-5zM476 74h4v4h-4zM489 83h4v4h-4z"/>
<path fill="#a0d8b0" d="M515 61h4v4h-4zM510 70h5v4h-5zM489 96h4v4h-4z"/>
<path fill="#28308c" d="M519 61h4v4h-4zM515 74h4v4h-4zM497 96h5v4h-5z"/>
<path fill="#222298" d="M528 61h4v4h-4zM532 61h4v4h-4zM523 65h5v5h-5zM528 70h4v4h-4zM523 74h5v4h-5zM515 78h4v5h-4zM519 78h4v5h-4zM506 91h4v5h-4zM502 104h4v5h-4zM502 109h4v4h-4zM497 113h5v4h-5zM497 122h5v4h-5zM203 139h4v4h-4zM497 139h5v4h-5zM216 143h4v5h-4zM225 143h4v5h-4zM272 143h5v5h-5zM497 143h5v5h-5zM229 148h4v4h-4zM255 148h4v4h-4zM277 148h4v4h-4zM285 148h5v4h-5zM506 148h4v4h-4zM207 152h5v4h-5zM212 152h4v4h-4zM285 152h5v4h-5zM502 152h4v4h-4zM303 156h4v5h-4zM376 156h5v5h-5zM510 156h5v5h-5zM307 161h4v4h-4zM506 161h4v4h-4zM359 165h4v4h-4zM389 169h5v5h-5zM311 174h5v4h-5zM346 174h4v4h-4zM506 174h4v4h-4zM329 178h4v4h-4zM333 178h4v4h-4zM402 178h5v4h-5zM411 187h4v4h-4zM523 191h5v4h-5zM519 195h4v5h-4zM523 200h5v4h-5zM432 208h5v5h-5zM432 213h5v4h-5zM536 217h5v4h-5zM428 221h4v5h-4zM428 226h4v4h-4zM536 234h5v5h-5zM545 239h4v4h-4zM432 273h5v5h-5zM554 273h4v5h-4zM437 286h4v4h-4zM441 290h4v5h-4zM558 299h4v4h-4zM463 303h4v5h-4zM454 308h4v4h-4zM463 321h4v4h-4zM471 334h5v4h-5zM545 334h4v4h-4zM489 342h4v5h-4zM549 342h5v5h-5zM497 355h5v5h-5zM545 355h4v5h-4zM497 364h5v4h-5zM528 364h4v4h-4zM502 368h4v5h-4zM497 373h5v4h-5zM523 373h5v4h-5z"/>
<path fill="#1d1d86" d="M541 61h4v4h-4zM545 61h4v4h-4zM528 74h4v4h-4zM541 74h4v4h-4zM510 83h5v4h-5zM523 83h5v4h-5zM523 87h5v4h-5zM510 91h5v5h-5zM515 91h4v5h-4zM523 91h5v5h-5zM515 96h4v4h-4zM519 100h4v4h-4zM506 104h4v5h-4zM506 109h4v4h-4zM510 109h5v4h-5zM502 117h4v5h-4zM506 117h4v5h-4zM506 122h4v4h-4zM510 122h5v4h-5zM510 130h5v5h-5zM515 130h4v5h-4zM493 135h4v4h-4zM238 139h4v4h-4zM242 139h4v4h-4zM510 139h5v4h-5zM268 143h4v5h-4zM285 143h5v5h-5zM290 143h4v5h-4zM515 143h4v5h-4zM207 148h5v4h-5zM225 148h4v4h-4zM281 148h4v4h-4zM298 148h5v4h-5zM242 152h4v4h-4zM264 152h4v4h-4zM272 152h5v4h-5zM281 152h4v4h-4zM376 152h5v4h-5zM510 152h5v4h-5zM203 156h4v5h-4zM220 156h5v5h-5zM238 156h4v5h-4zM277 156h4v5h-4zM285 156h5v5h-5zM294 156h4v5h-4zM355 156h4v5h-4zM381 156h4v5h-4zM506 156h4v5h-4zM515 156h4v5h-4zM229 161h4v4h-4zM290 161h4v4h-4zM502 161h4v4h-4zM510 161h5v4h-5zM515 161h4v4h-4zM523 161h5v4h-5zM285 165h5v4h-5zM311 165h5v4h-5zM372 165h4v4h-4zM376 165h5v4h-5zM381 165h4v4h-4zM385 165h4v4h-4zM510 165h5v4h-5zM519 165h4v4h-4zM372 169h4v5h-4zM510 169h5v5h-5zM519 169h4v5h-4zM528 169h4v5h-4zM303 174h4v4h-4zM324 174h5v4h-5zM342 174h4v4h-4zM350 174h5v4h-5zM372 174h4v4h-4zM376 174h5v4h-5zM381 174h4v4h-4zM510 174h5v4h-5zM307 178h4v4h-4zM350 178h5v4h-5zM368 178h4v4h-4zM385 178h4v4h-4zM389 178h5v4h-5zM398 178h4v4h-4zM506 178h4v4h-4zM523 178h5v4h-5zM324 182h5v5h-5zM342 182h4v5h-4zM381 182h4v5h-4zM385 182h4v5h-4zM407 182h4v5h-4zM528 182h4v5h-4zM532 182h4v5h-4zM316 187h4v4h-4zM320 187h4v4h-4zM324 187h5v4h-5zM329 187h4v4h-4zM346 187h4v4h-4zM350 187h5v4h-5zM398 187h4v4h-4zM523 187h5v4h-5zM316 191h4v4h-4zM324 191h5v4h-5zM342 191h4v4h-4zM389 191h5v4h-5zM402 191h5v4h-5zM420 191h4v4h-4zM424 191h4v4h-4zM519 191h4v4h-4zM528 191h4v4h-4zM532 191h4v4h-4zM402 195h5v5h-5zM411 195h4v5h-4zM528 195h4v5h-4zM536 195h5v5h-5zM415 204h5v4h-5zM541 204h4v4h-4zM545 204h4v4h-4zM415 208h5v5h-5zM536 208h5v5h-5zM549 208h5v5h-5zM411 213h4v4h-4zM415 213h5v4h-5zM549 213h5v4h-5zM407 221h4v5h-4zM415 221h5v5h-5zM536 221h5v5h-5zM541 221h4v5h-4zM549 221h5v5h-5zM407 226h4v4h-4zM415 226h5v4h-5zM528 226h4v4h-4zM532 226h4v4h-4zM545 226h4v4h-4zM549 226h5v4h-5zM411 230h4v4h-4zM415 230h5v4h-5zM407 234h4v5h-4zM420 234h4v5h-4zM549 234h5v5h-5zM420 239h4v4h-4zM549 239h5v4h-5zM554 239h4v4h-4zM415 243h5v4h-5zM420 243h4v4h-4zM407 247h4v5h-4zM415 247h5v5h-5zM549 247h5v5h-5zM554 247h4v5h-4zM415 252h5v4h-5zM558 252h4v4h-4zM432 256h5v4h-5zM545 256h4v4h-4zM549 256h5v4h-5zM558 256h4v4h-4zM562 256h5v4h-5zM415 260h5v5h-5zM432 260h5v5h-5zM437 265h4v4h-4zM567 265h4v4h-4zM428 269h4v4h-4zM558 269h4v4h-4zM567 269h4v4h-4zM571 273h3v5h-3zM420 278h4v4h-4zM428 278h4v4h-4zM558 278h4v4h-4zM571 278h3v4h-3zM420 282h4v4h-4zM558 282h4v4h-4zM424 290h4v5h-4zM428 290h4v5h-4zM432 290h5v5h-5zM437 290h4v5h-4zM558 290h4v5h-4zM571 290h3v5h-3zM428 295h4v4h-4zM437 295h4v4h-4zM454 295h4v4h-4zM567 295h4v4h-4zM562 299h5v4h-5zM567 299h4v4h-4zM437 303h4v5h-4zM441 303h4v5h-4zM562 303h5v5h-5zM567 303h4v5h-4zM437 308h4v4h-4zM558 308h4v4h-4zM562 308h5v4h-5zM441 312h4v4h-4zM445 312h5v4h-5zM450 312h4v4h-4zM454 312h4v4h-4zM558 312h4v4h-4zM567 312h4v4h-4zM445 321h5v4h-5zM454 325h4v4h-4zM458 325h5v4h-5zM467 325h4v4h-4zM567 325h4v4h-4zM454 329h4v5h-4zM463 329h4v5h-4zM467 329h4v5h-4zM554 329h4v5h-4zM562 329h5v5h-5zM463 334h4v4h-4zM554 334h4v4h-4zM467 338h4v4h-4zM493 338h4v4h-4zM541 338h4v4h-4zM554 338h4v4h-4zM558 342h4v5h-4zM476 347h4v4h-4zM480 347h4v4h-4zM471 351h5v4h-5zM480 351h4v4h-4zM536 351h5v4h-5zM476 355h4v5h-4zM489 355h4v5h-4zM558 355h4v5h-4zM484 360h5v4h-5zM480 364h4v4h-4zM523 364h5v4h-5zM536 364h5v4h-5zM549 364h5v4h-5zM541 368h4v5h-4zM545 368h4v5h-4zM510 373h5v4h-5zM519 373h4v4h-4zM545 373h4v4h-4zM484 377h5v4h-5zM489 377h4v4h-4zM506 377h4v4h-4zM515 377h4v4h-4zM528 377h4v4h-4zM493 381h4v5h-4zM515 381h4v5h-4zM523 381h5v5h-5zM528 381h4v5h-4zM532 381h4v5h-4z"/>
<path fill="#606818" d="M342 65h4v5h-4zM346 65h4v5h-4zM350 65h5v5h-5zM342 70h4v4h-4zM346 70h4v4h-4zM355 70h4v4h-4zM359 70h4v4h-4zM355 74h4v4h-4zM355 78h4v5h-4zM359 78h4v5h-4zM355 83h4v4h-4z"/>
<path fill="#c8e098" d="M484 65h5v5h-5zM493 65h4v5h-4zM502 65h4v5h-4zM467 70h4v4h-4zM502 70h4v4h-4zM467 74h4v4h-4zM450 83h4v4h-4zM454 83h4v4h-4zM476 83h4v4h-4z"/>
<path fill="#589838" d="M497 65h5v5h-5zM515 65h4v5h-4zM458 70h5v4h-5zM463 70h4v4h-4zM497 70h5v4h-5zM497 74h5v4h-5zM502 74h4v4h-4zM450 78h4v5h-4zM454 78h4v5h-4zM497 78h5v5h-5zM480 83h4v4h-4z"/>
<path fill="#1a2c6c" d="M519 65h4v5h-4zM493 100h4v4h-4zM489 113h4v4h-4zM489 122h4v4h-4zM493 122h4v4h-4zM493 126h4v4h-4z"/>
<path fill="#1e1e8a" d="M528 65h4v5h-4zM541 70h4v4h-4zM519 74h4v4h-4zM515 83h4v4h-4zM506 87h4v4h-4zM510 87h5v4h-5zM528 87h4v4h-4zM502 91h4v5h-4zM528 91h4v5h-4zM497 100h5v4h-5zM515 104h4v5h-4zM506 113h4v4h-4zM497 117h5v5h-5zM497 126h5v4h-5zM506 126h4v4h-4zM493 130h4v5h-4zM515 135h4v4h-4zM246 139h5v4h-5zM277 139h4v4h-4zM207 143h5v5h-5zM233 143h5v5h-5zM259 143h5v5h-5zM264 143h4v5h-4zM519 143h4v5h-4zM242 148h4v4h-4zM259 148h5v4h-5zM268 148h4v4h-4zM502 148h4v4h-4zM519 148h4v4h-4zM216 152h4v4h-4zM255 152h4v4h-4zM268 152h4v4h-4zM290 152h4v4h-4zM294 152h4v4h-4zM303 152h4v4h-4zM506 152h4v4h-4zM242 156h4v5h-4zM290 156h4v5h-4zM368 156h4v5h-4zM502 156h4v5h-4zM519 156h4v5h-4zM523 156h5v5h-5zM233 161h5v4h-5zM246 161h5v4h-5zM268 161h4v4h-4zM272 161h5v4h-5zM285 161h5v4h-5zM303 161h4v4h-4zM311 161h5v4h-5zM355 161h4v4h-4zM363 161h5v4h-5zM372 161h4v4h-4zM385 161h4v4h-4zM290 165h4v4h-4zM298 165h5v4h-5zM303 165h4v4h-4zM350 165h5v4h-5zM523 165h5v4h-5zM294 169h4v5h-4zM324 169h5v5h-5zM342 169h4v5h-4zM363 169h5v5h-5zM368 169h4v5h-4zM376 169h5v5h-5zM385 169h4v5h-4zM523 169h5v5h-5zM316 174h4v4h-4zM320 174h4v4h-4zM359 174h4v4h-4zM394 174h4v4h-4zM398 174h4v4h-4zM515 174h4v4h-4zM528 174h4v4h-4zM337 178h5v4h-5zM342 178h4v4h-4zM346 178h4v4h-4zM355 178h4v4h-4zM407 178h4v4h-4zM532 178h4v4h-4zM398 182h4v5h-4zM402 182h5v5h-5zM515 182h4v5h-4zM536 182h5v5h-5zM402 187h5v4h-5zM415 187h5v4h-5zM515 187h4v4h-4zM519 187h4v4h-4zM536 191h5v4h-5zM541 191h4v4h-4zM394 195h4v5h-4zM407 195h4v5h-4zM415 195h5v5h-5zM420 195h4v5h-4zM420 200h4v4h-4zM420 204h4v4h-4zM528 204h4v4h-4zM532 204h4v4h-4zM541 208h4v5h-4zM428 213h4v4h-4zM415 217h5v4h-5zM532 217h4v4h-4zM549 217h5v4h-5zM411 221h4v5h-4zM420 221h4v5h-4zM424 221h4v5h-4zM532 221h4v5h-4zM545 221h4v5h-4zM424 226h4v4h-4zM420 230h4v4h-4zM424 230h4v4h-4zM545 230h4v4h-4zM549 230h5v4h-5zM554 230h4v4h-4zM415 239h5v4h-5zM532 239h4v4h-4zM536 239h5v4h-5zM411 243h4v4h-4zM428 243h4v4h-4zM411 247h4v5h-4zM420 247h4v5h-4zM536 247h5v5h-5zM420 252h4v4h-4zM541 252h4v4h-4zM549 252h5v4h-5zM554 252h4v4h-4zM415 256h5v4h-5zM420 256h4v4h-4zM411 260h4v5h-4zM424 260h4v5h-4zM541 260h4v5h-4zM545 260h4v5h-4zM415 265h5v4h-5zM432 265h5v4h-5zM545 265h4v4h-4zM554 265h4v4h-4zM415 269h5v4h-5zM432 269h5v4h-5zM549 269h5v4h-5zM562 269h5v4h-5zM424 273h4v5h-4zM558 273h4v5h-4zM432 278h5v4h-5zM428 282h4v4h-4zM562 282h5v4h-5zM428 286h4v4h-4zM558 286h4v4h-4zM562 286h5v4h-5zM567 286h4v4h-4zM571 286h3v4h-3zM450 295h4v4h-4zM432 299h5v4h-5zM454 303h4v5h-4zM441 308h4v4h-4zM445 308h5v4h-5zM571 308h3v4h-3zM458 312h5v4h-5zM554 312h4v4h-4zM458 316h5v5h-5zM463 316h4v5h-4zM471 321h5v4h-5zM562 321h5v4h-5zM567 321h4v4h-4zM558 325h4v4h-4zM476 329h4v5h-4zM484 329h5v5h-5zM549 329h5v5h-5zM458 334h5v4h-5zM549 334h5v4h-5zM463 338h4v4h-4zM471 338h5v4h-5zM484 342h5v5h-5zM493 342h4v5h-4zM471 347h5v4h-5zM484 347h5v4h-5zM493 347h4v4h-4zM536 347h5v4h-5zM545 347h4v4h-4zM554 347h4v4h-4zM536 355h5v5h-5zM541 355h4v5h-4zM554 355h4v5h-4zM489 360h4v4h-4zM532 360h4v4h-4zM536 360h5v4h-5zM545 360h4v4h-4zM489 364h4v4h-4zM506 364h4v4h-4zM506 368h4v5h-4zM515 368h4v5h-4zM523 368h5v5h-5zM506 373h4v4h-4zM515 373h4v4h-4zM536 373h5v4h-5zM549 373h5v4h-5zM510 377h5v4h-5zM523 377h5v4h-5zM489 381h4v5h-4zM523 386h5v4h-5z"/>
<path fill="#183010" d="M324 70h5v4h-5zM329 70h4v4h-4zM324 74h5v4h-5zM329 74h4v4h-4zM324 78h5v5h-5zM329 78h4v5h-4z"/>
<path fill="#2424a0" d="M519 70h4v4h-4zM515 87h4v4h-4zM502 96h4v4h-4zM489 130h4v5h-4zM497 130h5v5h-5zM493 139h4v4h-4zM238 143h4v5h-4zM246 143h5v5h-5zM502 143h4v5h-4zM203 148h4v4h-4zM251 148h4v4h-4zM290 148h4v4h-4zM294 148h4v4h-4zM298 156h5v5h-5zM372 156h4v5h-4zM389 165h5v4h-5zM398 169h4v5h-4zM316 178h4v4h-4zM411 191h4v4h-4zM428 195h4v5h-4zM528 213h4v4h-4zM528 217h4v4h-4zM532 230h4v4h-4zM424 243h4v4h-4zM545 247h4v5h-4zM424 252h4v4h-4zM437 278h4v4h-4zM432 282h5v4h-5zM562 312h5v4h-5zM558 316h4v5h-4zM463 325h4v4h-4zM471 325h5v4h-5zM476 334h4v4h-4zM480 338h4v4h-4zM484 338h5v4h-5zM489 338h4v4h-4zM545 338h4v4h-4zM545 351h4v4h-4zM502 364h4v4h-4zM510 368h5v5h-5zM532 368h4v5h-4z"/>
<path fill="#202090" d="M523 70h5v4h-5zM506 96h4v4h-4zM502 100h4v4h-4zM497 104h5v5h-5zM502 122h4v4h-4zM272 139h5v4h-5zM502 139h4v4h-4zM203 143h4v5h-4zM220 143h5v5h-5zM251 143h4v5h-4zM264 148h4v4h-4zM303 148h4v4h-4zM359 161h4v4h-4zM376 161h5v4h-5zM355 165h4v4h-4zM363 165h5v4h-5zM307 169h4v5h-4zM316 169h4v5h-4zM346 169h4v5h-4zM506 169h4v5h-4zM515 169h4v5h-4zM320 178h4v4h-4zM510 178h5v4h-5zM515 178h4v4h-4zM519 178h4v4h-4zM510 182h5v5h-5zM519 182h4v5h-4zM407 187h4v4h-4zM415 191h5v4h-5zM515 191h4v4h-4zM424 195h4v5h-4zM519 200h4v4h-4zM528 200h4v4h-4zM424 204h4v4h-4zM523 204h5v4h-5zM424 208h4v5h-4zM428 208h4v5h-4zM536 213h5v4h-5zM428 217h4v4h-4zM541 230h4v4h-4zM541 243h4v4h-4zM545 243h4v4h-4zM424 256h4v4h-4zM428 256h4v4h-4zM437 282h4v4h-4zM441 282h4v4h-4zM445 286h5v4h-5zM441 295h4v4h-4zM445 299h5v4h-5zM463 308h4v4h-4zM467 308h4v4h-4zM463 312h4v4h-4zM562 316h5v5h-5zM549 321h5v4h-5zM554 321h4v4h-4zM554 325h4v4h-4zM558 329h4v5h-4zM480 334h4v4h-4zM493 334h4v4h-4zM476 338h4v4h-4zM493 355h4v5h-4zM497 360h5v4h-5zM519 364h4v4h-4zM497 368h5v5h-5zM536 368h5v5h-5zM502 373h4v4h-4z"/>
<path fill="#3c8028" d="M246 74h5v4h-5zM229 113h4v4h-4z"/>
<path fill="#5cb848" d="M437 74h4v4h-4zM437 78h4v5h-4zM463 87h4v4h-4zM471 91h5v5h-5zM476 91h4v5h-4zM450 96h4v4h-4zM476 96h4v4h-4zM480 96h4v4h-4zM484 96h5v4h-5zM450 100h4v4h-4zM454 100h4v4h-4zM471 100h5v4h-5zM476 100h4v4h-4zM415 104h5v5h-5zM420 104h4v5h-4zM432 104h5v5h-5zM441 104h4v5h-4zM445 104h5v5h-5zM454 104h4v5h-4zM458 104h5v5h-5zM424 109h4v4h-4zM432 109h5v4h-5zM437 109h4v4h-4zM445 109h5v4h-5zM458 109h5v4h-5zM471 109h5v4h-5zM437 113h4v4h-4zM441 113h4v4h-4zM445 113h5v4h-5zM463 113h4v4h-4zM471 113h5v4h-5zM428 117h4v5h-4zM432 117h5v5h-5zM437 117h4v5h-4zM445 117h5v5h-5zM450 117h4v5h-4zM458 117h5v5h-5zM463 117h4v5h-4zM476 117h4v5h-4zM407 122h4v4h-4zM428 122h4v4h-4zM432 122h5v4h-5zM437 122h4v4h-4zM450 122h4v4h-4zM458 122h5v4h-5zM463 122h4v4h-4zM415 126h5v4h-5zM432 126h5v4h-5zM454 126h4v4h-4zM476 126h4v4h-4zM445 130h5v5h-5zM458 130h5v5h-5zM463 130h4v5h-4zM471 130h5v5h-5zM420 135h4v4h-4zM432 135h5v4h-5zM420 139h4v4h-4z"/>
<path fill="#202890" d="M506 78h4v5h-4zM506 83h4v4h-4zM493 104h4v5h-4z"/>
<path fill="#18386c" d="M510 78h5v5h-5zM497 91h5v5h-5zM493 96h4v4h-4zM489 126h4v4h-4z"/>
<path fill="#104030" d="M497 83h5v4h-5zM484 117h5v5h-5zM484 122h5v4h-5z"/>
<path fill="#a8f488" d="M432 87h5v4h-5zM432 91h5v5h-5zM445 91h5v5h-5zM424 96h4v4h-4zM428 96h4v4h-4zM432 96h5v4h-5zM437 96h4v4h-4zM441 96h4v4h-4zM420 100h4v4h-4zM424 100h4v4h-4zM428 100h4v4h-4zM432 100h5v4h-5zM437 100h4v4h-4zM441 100h4v4h-4zM424 104h4v5h-4zM428 104h4v5h-4zM437 104h4v5h-4zM471 104h5v5h-5zM476 104h4v5h-4zM428 109h4v4h-4zM450 109h4v4h-4zM450 113h4v4h-4zM458 113h5v4h-5zM441 117h4v5h-4zM441 122h4v4h-4zM445 122h5v4h-5zM437 126h4v4h-4zM437 130h4v5h-4zM437 135h4v4h-4z"/>
<path fill="#2c9824" d="M437 87h4v4h-4zM441 87h4v4h-4zM437 91h4v5h-4zM441 91h4v5h-4zM450 91h4v5h-4zM463 96h4v4h-4zM420 113h4v4h-4zM420 117h4v5h-4zM420 126h4v4h-4zM445 126h5v4h-5zM428 130h4v5h-4zM454 130h4v5h-4zM484 130h5v5h-5zM424 135h4v4h-4z"/>
<path fill="#50ac40" d="M476 87h4v4h-4zM480 87h4v4h-4zM489 87h4v4h-4zM454 96h4v4h-4zM467 96h4v4h-4zM471 96h5v4h-5zM480 100h4v4h-4zM484 100h5v4h-5zM450 104h4v5h-4zM480 104h4v5h-4zM484 104h5v5h-5zM476 109h4v4h-4zM480 109h4v4h-4zM484 109h5v4h-5zM428 113h4v4h-4zM432 113h5v4h-5zM454 113h4v4h-4zM484 113h5v4h-5zM480 117h4v5h-4zM420 122h4v4h-4zM441 126h4v4h-4zM432 130h5v5h-5zM441 130h4v5h-4zM441 135h4v4h-4zM445 139h5v4h-5zM450 139h4v4h-4zM454 139h4v4h-4zM458 139h5v4h-5z"/>
<path fill="#7a4c10" d="M359 91h4v5h-4zM363 91h5v5h-5z"/>
<path fill="#6cc458" d="M424 91h4v5h-4zM428 91h4v5h-4zM445 96h5v4h-5zM458 96h5v4h-5zM445 100h5v4h-5zM458 100h5v4h-5zM463 100h4v4h-4zM467 100h4v4h-4zM415 109h5v4h-5zM420 109h4v4h-4zM441 109h4v4h-4zM415 113h5v4h-5zM424 113h4v4h-4zM476 113h4v4h-4zM480 113h4v4h-4zM415 117h5v5h-5zM424 117h4v5h-4zM471 117h5v5h-5zM471 122h5v4h-5zM450 126h4v4h-4zM458 126h5v4h-5zM463 126h4v4h-4zM471 126h5v4h-5zM484 126h5v4h-5zM450 130h4v5h-4z"/>
<path fill="#90e070" d="M454 91h4v5h-4zM458 91h5v5h-5zM463 91h4v5h-4zM467 91h4v5h-4zM463 104h4v5h-4zM467 104h4v5h-4zM463 109h4v4h-4zM467 109h4v4h-4zM467 113h4v4h-4zM454 117h4v5h-4zM467 117h4v5h-4zM454 122h4v4h-4zM476 122h4v4h-4zM480 122h4v4h-4zM424 126h4v4h-4zM428 126h4v4h-4zM480 126h4v4h-4z"/>
<path fill="#c4f8a4" d="M480 91h4v5h-4zM484 91h5v5h-5zM489 91h4v5h-4zM454 109h4v4h-4zM420 130h4v5h-4zM424 130h4v5h-4zM480 130h4v5h-4zM445 135h5v4h-5zM450 135h4v4h-4zM454 135h4v4h-4z"/>
<path fill="#b89850" d="M355 96h4v4h-4zM359 96h4v4h-4zM355 100h4v4h-4zM355 104h4v5h-4z"/>
<path fill="#c0a058" d="M363 96h5v4h-5zM359 100h4v4h-4zM363 100h5v4h-5zM368 100h4v4h-4z"/>
<path fill="#3c9454" d="M489 104h4v5h-4z"/>
<path fill="#d8e890" d="M225 109h4v4h-4z"/>
<path fill="#a8c8b8" d="M203 122h4v4h-4zM311 148h5v4h-5zM389 156h5v5h-5zM519 204h4v4h-4zM549 286h5v4h-5z"/>
<path fill="#d8d890" d="M207 122h5v4h-5zM311 122h5v4h-5zM285 126h5v4h-5zM277 130h4v5h-4zM277 135h4v4h-4zM281 135h4v4h-4z"/>
<path fill="#c8e890" d="M212 122h4v4h-4zM216 122h4v4h-4zM220 122h5v4h-5zM225 122h4v4h-4zM229 122h4v4h-4zM233 122h5v4h-5zM242 122h4v4h-4zM255 122h4v4h-4zM268 122h4v4h-4zM303 122h4v4h-4zM320 122h4v4h-4zM212 126h4v4h-4zM216 126h4v4h-4zM220 126h5v4h-5zM225 126h4v4h-4zM229 126h4v4h-4zM238 126h4v4h-4zM242 126h4v4h-4zM255 126h4v4h-4zM216 130h4v5h-4zM242 130h4v5h-4zM255 130h4v5h-4zM285 130h5v5h-5zM294 130h4v5h-4zM255 135h4v4h-4zM285 135h5v4h-5zM294 135h4v4h-4z"/>
<path fill="#a8d878" d="M246 122h5v4h-5zM251 122h4v4h-4zM259 122h5v4h-5zM264 122h4v4h-4zM290 122h4v4h-4zM294 122h4v4h-4zM298 122h5v4h-5zM251 126h4v4h-4zM259 126h5v4h-5zM264 126h4v4h-4zM268 126h4v4h-4zM290 126h4v4h-4zM294 126h4v4h-4zM212 130h4v5h-4zM238 130h4v5h-4zM251 130h4v5h-4zM290 130h4v5h-4zM216 135h4v4h-4zM233 135h5v4h-5zM238 135h4v4h-4zM242 135h4v4h-4zM246 135h5v4h-5zM251 135h4v4h-4zM290 135h4v4h-4zM212 139h4v4h-4zM216 139h4v4h-4zM290 139h4v4h-4zM294 139h4v4h-4z"/>
<path fill="#e0f0a8" d="M272 122h5v4h-5zM277 122h4v4h-4zM281 122h4v4h-4zM333 122h4v4h-4zM337 122h5v4h-5zM246 126h5v4h-5zM272 126h5v4h-5zM277 126h4v4h-4zM281 126h4v4h-4zM220 130h5v5h-5zM246 130h5v5h-5zM259 130h5v5h-5zM264 130h4v5h-4zM268 130h4v5h-4zM272 130h5v5h-5zM281 130h4v5h-4zM212 135h4v4h-4zM220 135h5v4h-5z"/>
<path fill="#208020" d="M424 122h4v4h-4zM467 122h4v4h-4zM467 126h4v4h-4zM467 130h4v5h-4zM467 135h4v4h-4z"/>
<path fill="#88b858" d="M203 126h4v4h-4zM207 126h5v4h-5zM233 126h5v4h-5zM203 130h4v5h-4zM207 130h5v5h-5zM225 130h4v5h-4zM233 130h5v5h-5zM203 135h4v4h-4zM225 135h4v4h-4zM229 135h4v4h-4z"/>
<path fill="#2c8c2c" d="M298 126h5v4h-5zM303 126h4v4h-4zM307 126h4v4h-4zM311 126h5v4h-5zM324 126h5v4h-5zM329 126h4v4h-4zM333 126h4v4h-4zM355 126h4v4h-4zM389 126h5v4h-5zM333 130h4v5h-4zM359 130h4v5h-4zM389 130h5v5h-5zM381 135h4v4h-4zM389 135h5v4h-5zM394 135h4v4h-4zM303 139h4v4h-4zM320 139h4v4h-4zM324 139h5v4h-5zM324 143h5v5h-5zM337 156h5v5h-5zM337 161h5v4h-5zM333 165h4v4h-4zM337 165h5v4h-5z"/>
<path fill="#4cac3c" d="M316 126h4v4h-4zM320 126h4v4h-4zM337 126h5v4h-5zM350 126h5v4h-5zM368 126h4v4h-4zM372 126h4v4h-4zM376 126h5v4h-5zM298 130h5v5h-5zM303 130h4v5h-4zM307 130h4v5h-4zM368 130h4v5h-4zM372 130h4v5h-4zM381 130h4v5h-4zM385 130h4v5h-4zM311 135h5v4h-5zM320 135h4v4h-4zM324 135h5v4h-5zM337 135h5v4h-5zM350 135h5v4h-5zM385 135h4v4h-4zM311 139h5v4h-5zM350 139h5v4h-5zM372 139h4v4h-4zM376 139h5v4h-5zM385 139h4v4h-4zM389 139h5v4h-5zM394 139h4v4h-4zM311 143h5v5h-5zM350 143h5v5h-5zM372 143h4v5h-4zM376 143h5v5h-5zM381 143h4v5h-4zM385 143h4v5h-4zM389 143h5v5h-5zM320 148h4v4h-4zM324 148h5v4h-5zM329 148h4v4h-4zM342 148h4v4h-4zM346 148h4v4h-4zM350 148h5v4h-5zM355 148h4v4h-4zM372 148h4v4h-4zM385 148h4v4h-4zM389 148h5v4h-5zM320 152h4v4h-4zM324 152h5v4h-5zM329 152h4v4h-4zM342 152h4v4h-4zM359 152h4v4h-4zM363 152h5v4h-5zM385 152h4v4h-4zM389 152h5v4h-5zM342 156h4v5h-4zM350 156h5v5h-5zM333 161h4v4h-4z"/>
<path fill="#68bc50" d="M359 126h4v4h-4zM363 126h5v4h-5zM311 130h5v5h-5zM316 130h4v5h-4zM320 130h4v5h-4zM363 130h5v5h-5zM303 135h4v4h-4zM307 135h4v4h-4zM316 135h4v4h-4zM342 135h4v4h-4zM359 135h4v4h-4zM363 135h5v4h-5zM307 139h4v4h-4zM316 139h4v4h-4zM342 139h4v4h-4zM316 143h4v5h-4zM320 143h4v5h-4zM346 143h4v5h-4zM346 152h4v4h-4zM350 152h5v4h-5zM394 156h4v5h-4zM394 161h4v4h-4z"/>
<path fill="#3c9c34" d="M381 126h4v4h-4zM329 130h4v5h-4zM355 130h4v5h-4zM329 135h4v4h-4zM333 135h4v4h-4zM346 135h4v4h-4zM355 135h4v4h-4zM368 135h4v4h-4zM372 135h4v4h-4zM329 139h4v4h-4zM355 139h4v4h-4zM359 139h4v4h-4zM368 139h4v4h-4zM307 143h4v5h-4zM329 143h4v5h-4zM342 143h4v5h-4zM368 143h4v5h-4zM316 148h4v4h-4zM363 148h5v4h-5zM368 148h4v4h-4zM316 152h4v4h-4zM316 156h4v5h-4zM320 156h4v5h-4zM320 161h4v4h-4zM324 161h5v4h-5zM342 161h4v4h-4z"/>
<path fill="#80d060" d="M385 126h4v4h-4zM337 130h5v5h-5zM342 130h4v5h-4zM346 130h4v5h-4zM350 130h5v5h-5zM376 130h5v5h-5zM376 135h5v4h-5zM333 139h4v4h-4zM337 139h5v4h-5zM381 139h4v4h-4zM355 143h4v5h-4zM359 143h4v5h-4zM363 143h5v5h-5zM359 148h4v4h-4zM324 156h5v5h-5zM329 161h4v4h-4z"/>
<path fill="#e8f0a0" d="M398 126h4v4h-4zM394 130h4v5h-4zM411 130h4v5h-4zM415 130h5v5h-5zM411 139h4v4h-4z"/>
<path fill="#88a840" d="M407 126h4v4h-4zM407 130h4v5h-4zM398 139h4v4h-4zM402 139h5v4h-5z"/>
<path fill="#70b848" d="M411 126h4v4h-4zM411 135h4v4h-4zM415 135h5v4h-5zM415 139h5v4h-5z"/>
<path fill="#689838" d="M229 130h4v5h-4zM259 135h5v4h-5z"/>
<path fill="#a8ec88" d="M324 130h5v5h-5zM298 135h5v4h-5zM298 139h5v4h-5zM346 139h4v4h-4zM363 139h5v4h-5zM303 143h4v5h-4zM333 148h4v4h-4zM376 148h5v4h-5zM381 148h4v4h-4zM333 152h4v4h-4zM337 152h5v4h-5zM333 156h4v5h-4zM324 165h5v4h-5zM329 165h4v4h-4z"/>
<path fill="#9a7030" d="M476 130h4v5h-4zM471 135h5v4h-5zM471 139h5v4h-5z"/>
<path fill="#e8f0e8" d="M207 135h5v4h-5zM264 135h4v4h-4zM497 165h5v4h-5zM407 174h4v4h-4zM502 174h4v4h-4zM523 221h5v5h-5zM541 329h4v5h-4z"/>
<path fill="#5058a8" d="M268 135h4v4h-4zM220 139h5v4h-5zM363 156h5v5h-5zM346 161h4v4h-4zM411 178h4v4h-4zM420 187h4v4h-4zM432 217h5v4h-5zM541 256h4v4h-4zM549 282h5v4h-5zM554 290h4v5h-4zM458 299h5v4h-5zM476 321h4v4h-4zM497 347h5v4h-5zM541 347h4v4h-4z"/>
<path fill="#58a840" d="M428 135h4v4h-4zM463 135h4v4h-4zM437 139h4v4h-4zM441 139h4v4h-4zM463 139h4v4h-4zM467 139h4v4h-4zM420 143h4v5h-4zM463 143h4v5h-4zM467 143h4v5h-4zM471 143h5v5h-5zM489 156h4v5h-4z"/>
<path fill="#78c058" d="M458 135h5v4h-5zM476 148h4v4h-4zM480 148h4v4h-4zM484 148h5v4h-5zM480 152h4v4h-4zM484 152h5v4h-5zM484 156h5v5h-5zM450 161h4v4h-4zM454 161h4v4h-4zM493 161h4v4h-4zM480 165h4v4h-4zM463 169h4v5h-4zM467 169h4v5h-4zM471 169h5v5h-5zM484 169h5v5h-5zM454 174h4v4h-4zM471 174h5v4h-5zM476 174h4v4h-4zM489 174h4v4h-4zM493 174h4v4h-4zM471 178h5v4h-5zM476 178h4v4h-4zM467 182h4v5h-4zM476 182h4v5h-4zM454 187h4v4h-4zM450 191h4v4h-4zM454 191h4v4h-4z"/>
<path fill="#6a3c10" d="M476 135h4v4h-4zM484 135h5v4h-5zM480 139h4v4h-4zM484 139h5v4h-5z"/>
<path fill="#744414" d="M480 135h4v4h-4zM476 143h4v5h-4zM480 143h4v5h-4z"/>
<path fill="#f0f0e0" d="M489 135h4v4h-4zM489 139h4v4h-4zM346 156h4v5h-4zM497 161h5v4h-5zM432 239h5v4h-5zM532 243h4v4h-4zM437 252h4v4h-4zM528 355h4v5h-4z"/>
<path fill="#3038a0" d="M207 139h5v4h-5zM233 139h5v4h-5zM251 139h4v4h-4zM259 139h5v4h-5zM285 139h5v4h-5zM368 152h4v4h-4zM372 152h4v4h-4zM346 165h4v4h-4zM329 169h4v5h-4zM510 187h5v4h-5zM432 200h5v4h-5zM428 230h4v4h-4zM428 234h4v5h-4zM428 247h4v5h-4zM549 273h5v5h-5zM554 286h4v4h-4zM554 303h4v5h-4zM554 308h4v4h-4zM467 316h4v5h-4zM480 329h4v5h-4zM545 329h4v5h-4zM489 334h4v4h-4zM541 342h4v5h-4z"/>
<path fill="#d8e8d8" d="M225 139h4v4h-4zM281 139h4v4h-4zM307 148h4v4h-4zM467 312h4v4h-4zM523 360h5v4h-5z"/>
<path fill="#8890c8" d="M229 139h4v4h-4zM212 143h4v5h-4zM497 148h5v4h-5zM337 169h5v5h-5zM502 169h4v5h-4zM536 252h5v4h-5zM445 282h5v4h-5zM454 290h4v5h-4zM532 355h4v5h-4z"/>
<path fill="#98c878" d="M424 139h4v4h-4zM428 139h4v4h-4zM432 139h5v4h-5zM432 143h5v5h-5zM437 143h4v5h-4zM454 143h4v5h-4zM437 148h4v4h-4zM454 148h4v4h-4zM467 148h4v4h-4zM467 152h4v4h-4zM471 152h5v4h-5zM493 152h4v4h-4zM467 156h4v5h-4zM493 156h4v5h-4zM476 161h4v4h-4zM450 165h4v4h-4zM454 165h4v4h-4zM467 165h4v4h-4zM471 165h5v4h-5zM476 165h4v4h-4zM450 169h4v5h-4zM454 169h4v5h-4zM480 169h4v5h-4zM450 174h4v4h-4zM480 174h4v4h-4zM484 174h5v4h-5zM480 178h4v4h-4zM493 178h4v4h-4zM454 182h4v5h-4zM458 182h5v5h-5zM480 182h4v5h-4zM484 187h5v4h-5zM471 191h5v4h-5zM476 195h4v5h-4zM510 204h5v4h-5zM515 204h4v4h-4zM502 208h4v5h-4zM506 208h4v5h-4zM515 208h4v5h-4zM506 213h4v4h-4zM519 213h4v4h-4zM506 217h4v4h-4zM510 217h5v4h-5zM519 217h4v4h-4zM506 221h4v5h-4zM523 239h5v4h-5zM519 260h4v5h-4zM519 265h4v4h-4z"/>
<path fill="#7a4a18" d="M476 139h4v4h-4zM484 143h5v5h-5z"/>
<path fill="#a8c0d8" d="M294 143h4v5h-4zM311 152h5v4h-5zM497 156h5v5h-5zM316 165h4v4h-4zM415 182h5v5h-5zM523 208h5v5h-5zM484 334h5v4h-5z"/>
<path fill="#c8d0e8" d="M298 143h5v5h-5zM493 143h4v5h-4zM394 165h4v4h-4zM320 169h4v5h-4zM333 169h4v5h-4zM528 221h4v5h-4zM528 230h4v4h-4zM441 269h4v4h-4zM450 286h4v4h-4zM450 290h4v5h-4zM554 295h4v4h-4zM476 325h4v4h-4zM497 351h5v4h-5z"/>
<path fill="#c0e8a0" d="M333 143h4v5h-4zM337 143h5v5h-5zM337 148h5v4h-5zM355 152h4v4h-4zM329 156h4v5h-4z"/>
<path fill="#a0b850" d="M394 143h4v5h-4zM398 143h4v5h-4zM407 143h4v5h-4zM411 143h4v5h-4z"/>
<path fill="#a8e888" d="M415 143h5v5h-5zM441 143h4v5h-4zM450 148h4v4h-4zM463 148h4v4h-4zM458 152h5v4h-5zM463 152h4v4h-4zM476 152h4v4h-4zM458 156h5v5h-5zM463 156h4v5h-4zM471 156h5v5h-5zM476 156h4v5h-4zM458 161h5v4h-5zM471 161h5v4h-5zM480 161h4v4h-4zM489 161h4v4h-4zM458 165h5v4h-5zM463 165h4v4h-4zM484 165h5v4h-5zM489 165h4v4h-4zM493 165h4v4h-4zM450 178h4v4h-4zM454 178h4v4h-4zM458 178h5v4h-5zM489 178h4v4h-4zM450 182h4v5h-4zM489 182h4v5h-4zM493 182h4v5h-4zM450 187h4v4h-4zM458 187h5v4h-5z"/>
<path fill="#d0f0c0" d="M424 143h4v5h-4zM428 143h4v5h-4zM458 148h5v4h-5zM471 148h5v4h-5zM480 156h4v5h-4zM467 161h4v4h-4zM476 169h4v5h-4zM463 174h4v4h-4zM463 178h4v4h-4zM463 182h4v5h-4z"/>
<path fill="#e8eca8" d="M445 143h5v5h-5zM450 143h4v5h-4zM458 143h5v5h-5zM489 148h4v4h-4zM493 148h4v4h-4zM454 152h4v4h-4zM454 156h4v5h-4zM484 161h5v4h-5zM467 174h4v4h-4zM467 178h4v4h-4zM484 178h5v4h-5zM471 182h5v5h-5zM484 182h5v5h-5zM476 191h4v4h-4zM489 200h4v4h-4zM515 221h4v5h-4zM519 221h4v5h-4zM519 226h4v4h-4z"/>
<path fill="#d8e8e0" d="M489 143h4v5h-4zM316 161h4v4h-4zM415 178h5v4h-5zM502 178h4v4h-4zM432 230h5v4h-5zM541 269h4v4h-4zM515 360h4v4h-4z"/>
<path fill="#88a848" d="M394 148h4v4h-4zM398 148h4v4h-4zM441 148h4v4h-4zM445 148h5v4h-5zM445 152h5v4h-5zM450 152h4v4h-4zM450 156h4v5h-4zM420 169h4v5h-4zM424 169h4v5h-4zM428 169h4v5h-4zM432 169h5v5h-5zM437 169h4v5h-4zM415 174h5v4h-5zM420 174h4v4h-4zM428 174h4v4h-4zM432 174h5v4h-5zM437 174h4v4h-4zM428 178h4v4h-4zM432 178h5v4h-5zM432 195h5v5h-5zM458 213h5v4h-5zM463 213h4v4h-4zM467 213h4v4h-4z"/>
<path fill="#e8e8a0" d="M407 148h4v4h-4zM407 152h4v4h-4zM428 152h4v4h-4zM441 152h4v4h-4zM407 156h4v5h-4zM411 156h4v5h-4zM415 156h5v5h-5zM428 156h4v5h-4zM437 156h4v5h-4zM441 156h4v5h-4zM411 161h4v4h-4zM407 165h4v4h-4zM420 165h4v4h-4zM424 165h4v4h-4zM420 178h4v4h-4zM437 178h4v4h-4zM441 178h4v4h-4zM437 182h4v5h-4zM428 187h4v4h-4zM432 187h5v4h-5zM437 187h4v4h-4zM428 191h4v4h-4zM437 191h4v4h-4zM441 191h4v4h-4zM445 191h5v4h-5zM458 191h5v4h-5zM441 200h4v4h-4zM437 204h4v4h-4zM454 204h4v4h-4zM458 204h5v4h-5zM476 204h4v4h-4zM437 208h4v5h-4zM454 208h4v5h-4zM437 213h4v4h-4z"/>
<path fill="#a8a850" d="M411 148h4v4h-4zM415 148h5v4h-5zM420 148h4v4h-4zM432 148h5v4h-5zM411 152h4v4h-4zM415 152h5v4h-5zM420 152h4v4h-4zM424 152h4v4h-4zM432 152h5v4h-5zM398 156h4v5h-4zM424 156h4v5h-4zM415 161h5v4h-5zM420 161h4v4h-4zM424 161h4v4h-4zM428 161h4v4h-4zM437 161h4v4h-4zM398 165h4v4h-4zM428 165h4v4h-4zM432 165h5v4h-5zM437 165h4v4h-4zM441 165h4v4h-4zM402 169h5v5h-5zM407 169h4v5h-4zM411 169h4v5h-4zM415 169h5v5h-5zM441 169h4v5h-4zM445 169h5v5h-5zM411 174h4v4h-4zM441 174h4v4h-4zM445 178h5v4h-5zM420 182h4v5h-4zM441 182h4v5h-4zM424 187h4v4h-4zM441 187h4v4h-4zM432 191h5v4h-5zM463 191h4v4h-4zM437 195h4v5h-4zM441 195h4v5h-4zM445 195h5v5h-5zM450 195h4v5h-4zM458 195h5v5h-5zM463 195h4v5h-4zM437 200h4v4h-4zM458 200h5v4h-5zM463 200h4v4h-4zM441 204h4v4h-4zM445 204h5v4h-5zM450 204h4v4h-4zM463 204h4v4h-4zM467 204h4v4h-4zM450 208h4v5h-4zM458 208h5v5h-5zM463 208h4v5h-4zM467 208h4v5h-4zM450 213h4v4h-4zM471 213h5v4h-5zM458 217h5v4h-5zM463 217h4v4h-4zM467 217h4v4h-4zM471 217h5v4h-5z"/>
<path fill="#98c060" d="M424 148h4v4h-4zM428 148h4v4h-4zM407 161h4v4h-4zM432 161h5v4h-5zM402 165h5v4h-5zM445 182h5v5h-5zM476 208h4v5h-4z"/>
<path fill="#f0eca8" d="M394 152h4v4h-4zM398 152h4v4h-4zM420 156h4v5h-4zM402 161h5v4h-5zM415 165h5v4h-5zM445 165h5v4h-5zM424 174h4v4h-4zM424 178h4v4h-4zM424 182h4v5h-4zM428 182h4v5h-4zM432 182h5v5h-5zM454 195h4v5h-4zM445 200h5v4h-5zM450 200h4v4h-4zM454 200h4v4h-4zM471 208h5v5h-5zM519 208h4v5h-4zM463 221h4v5h-4zM467 221h4v5h-4zM445 226h5v4h-5zM463 226h4v4h-4zM437 230h4v4h-4zM471 230h5v4h-5zM519 230h4v4h-4zM480 234h4v5h-4zM484 234h5v5h-5zM506 234h4v5h-4zM519 234h4v5h-4zM523 234h5v5h-5zM493 243h4v4h-4zM497 243h5v4h-5zM432 247h5v5h-5zM450 247h4v5h-4zM484 252h5v4h-5zM515 252h4v4h-4zM519 252h4v4h-4zM480 256h4v4h-4zM467 260h4v5h-4zM471 260h5v5h-5zM480 260h4v5h-4zM445 265h5v4h-5zM450 265h4v4h-4zM454 265h4v4h-4zM493 265h4v4h-4zM497 265h5v4h-5zM532 265h4v4h-4zM536 265h5v4h-5zM467 269h4v4h-4zM532 269h4v4h-4zM536 269h5v4h-5zM536 273h5v5h-5zM541 273h4v5h-4zM463 278h4v4h-4zM467 278h4v4h-4zM502 278h4v4h-4zM480 282h4v4h-4zM484 282h5v4h-5zM541 286h4v4h-4zM545 286h4v4h-4zM541 290h4v5h-4zM549 290h5v5h-5zM484 295h5v4h-5zM506 308h4v4h-4z"/>
<path fill="#c8c878" d="M437 152h4v4h-4zM432 156h5v5h-5zM445 156h5v5h-5zM441 161h4v4h-4zM445 161h5v4h-5zM411 165h4v4h-4zM445 174h5v4h-5zM445 187h5v4h-5zM463 187h4v4h-4zM467 187h4v4h-4zM467 191h4v4h-4zM467 195h4v5h-4zM467 200h4v4h-4zM484 204h5v4h-5zM441 208h4v5h-4zM445 208h5v5h-5zM441 213h4v4h-4zM445 213h5v4h-5zM445 217h5v4h-5zM450 217h4v4h-4zM445 221h5v5h-5z"/>
<path fill="#286828" d="M489 152h4v4h-4zM463 161h4v4h-4zM458 169h5v5h-5zM489 169h4v5h-4zM493 169h4v5h-4zM458 174h5v4h-5z"/>
<path fill="#e8e8f4" d="M311 156h5v5h-5zM359 156h4v5h-4zM536 243h5v4h-5zM471 316h5v5h-5z"/>
<path fill="#505018" d="M398 161h4v4h-4z"/>
<path fill="#287028" d="M497 169h5v5h-5zM497 174h5v4h-5zM497 178h5v4h-5zM502 187h4v4h-4zM506 187h4v4h-4zM510 195h5v5h-5zM515 195h4v5h-4z"/>
<path fill="#f0f8e0" d="M497 182h5v5h-5zM515 200h4v4h-4z"/>
<path fill="#a0d088" d="M502 182h4v5h-4zM497 191h5v4h-5z"/>
<path fill="#e0f0c8" d="M506 182h4v5h-4zM502 195h4v5h-4zM506 195h4v5h-4zM506 200h4v4h-4zM510 200h5v4h-5z"/>
<path fill="#78a858" d="M471 187h5v4h-5zM476 187h4v4h-4zM471 195h5v5h-5zM484 195h5v5h-5zM489 195h4v5h-4zM493 195h4v5h-4zM493 200h4v4h-4zM493 204h4v4h-4zM502 204h4v4h-4zM506 204h4v4h-4zM519 247h4v5h-4z"/>
<path fill="#b8e0a0" d="M480 187h4v4h-4zM480 191h4v4h-4zM484 191h5v4h-5zM489 191h4v4h-4zM493 191h4v4h-4zM480 195h4v5h-4zM471 200h5v4h-5zM476 200h4v4h-4zM480 200h4v4h-4zM484 200h5v4h-5zM471 204h5v4h-5zM480 204h4v4h-4zM510 208h5v5h-5zM510 213h5v4h-5zM523 243h5v4h-5zM528 243h4v4h-4zM523 247h5v5h-5zM523 252h5v4h-5zM528 252h4v4h-4zM536 260h5v5h-5z"/>
<path fill="#182810" d="M489 187h4v4h-4zM493 187h4v4h-4zM497 187h5v4h-5z"/>
<path fill="#70b060" d="M502 191h4v4h-4z"/>
<path fill="#c8e8b0" d="M506 191h4v4h-4zM510 191h5v4h-5zM497 195h5v5h-5zM497 200h5v4h-5z"/>
<path fill="#184818" d="M502 200h4v4h-4z"/>
<path fill="#d8a868" d="M489 204h4v4h-4zM497 208h5v5h-5zM497 221h5v5h-5zM502 221h4v5h-4zM484 226h5v4h-5zM489 226h4v4h-4z"/>
<path fill="#e8c890" d="M497 204h5v4h-5zM480 221h4v5h-4zM480 226h4v4h-4zM484 230h5v4h-5zM489 230h4v4h-4zM493 230h4v4h-4zM489 234h4v5h-4zM493 234h4v5h-4zM497 234h5v5h-5zM489 239h4v4h-4zM497 239h5v4h-5z"/>
<path fill="#b8b468" d="M480 208h4v5h-4zM515 213h4v4h-4zM450 221h4v5h-4zM506 230h4v4h-4zM510 230h5v4h-5zM515 230h4v4h-4zM437 234h4v5h-4zM441 234h4v5h-4zM445 234h5v5h-5zM510 234h5v5h-5zM515 234h4v5h-4zM528 234h4v5h-4zM528 239h4v4h-4zM467 247h4v5h-4zM467 252h4v4h-4zM489 252h4v4h-4zM493 252h4v4h-4zM532 252h4v4h-4zM454 256h4v4h-4zM458 256h5v4h-5zM463 256h4v4h-4zM493 256h4v4h-4zM536 256h5v4h-5zM484 260h5v5h-5zM489 260h4v5h-4zM450 269h4v4h-4zM528 269h4v4h-4zM497 273h5v5h-5zM502 273h4v5h-4zM515 273h4v5h-4zM463 295h4v4h-4zM463 299h4v4h-4zM467 299h4v4h-4zM493 299h4v4h-4zM497 299h5v4h-5zM471 312h5v4h-5z"/>
<path fill="#a04810" d="M484 208h5v5h-5zM489 217h4v4h-4zM484 221h5v5h-5z"/>
<path fill="#b86428" d="M489 208h4v5h-4zM489 213h4v4h-4zM493 217h4v4h-4zM489 221h4v5h-4z"/>
<path fill="#984814" d="M493 208h4v5h-4zM493 213h4v4h-4z"/>
<path fill="#ecdc88" d="M454 213h4v4h-4zM454 217h4v4h-4zM454 221h4v5h-4zM510 221h5v5h-5zM467 230h4v4h-4zM445 239h5v4h-5zM450 239h4v4h-4zM454 239h4v4h-4zM467 239h4v4h-4zM510 239h5v4h-5zM515 239h4v4h-4zM519 239h4v4h-4zM471 243h5v4h-5zM484 243h5v4h-5zM510 243h5v4h-5zM515 243h4v4h-4zM463 247h4v5h-4zM515 247h4v5h-4zM467 256h4v4h-4zM471 256h5v4h-5zM489 256h4v4h-4zM528 256h4v4h-4zM506 260h4v5h-4zM510 260h5v5h-5zM528 260h4v5h-4zM532 260h4v5h-4zM510 265h5v4h-5zM454 269h4v4h-4zM493 269h4v4h-4zM506 273h4v5h-4zM510 273h5v5h-5zM528 273h4v5h-4zM497 278h5v4h-5zM541 278h4v4h-4zM523 282h5v4h-5zM536 282h5v4h-5zM541 282h4v4h-4zM454 286h4v4h-4zM497 286h5v4h-5zM497 290h5v5h-5zM502 290h4v5h-4zM502 295h4v4h-4zM528 295h4v4h-4zM515 299h4v4h-4zM519 299h4v4h-4zM523 299h5v4h-5zM515 303h4v5h-4zM515 308h4v4h-4zM515 312h4v4h-4zM519 312h4v4h-4zM489 316h4v5h-4zM489 321h4v4h-4zM493 321h4v4h-4zM497 321h5v4h-5zM502 321h4v4h-4zM506 321h4v4h-4zM493 325h4v4h-4zM493 329h4v5h-4zM497 329h5v5h-5zM497 334h5v4h-5zM497 338h5v4h-5z"/>
<path fill="#f0e490" d="M476 213h4v4h-4zM523 217h5v4h-5zM437 221h4v5h-4zM441 221h4v5h-4zM467 226h4v4h-4zM506 226h4v4h-4zM515 226h4v4h-4zM441 230h4v4h-4zM445 230h5v4h-5zM480 230h4v4h-4zM502 234h4v5h-4zM484 239h5v4h-5zM502 239h4v4h-4zM506 239h4v4h-4zM480 243h4v4h-4zM489 243h4v4h-4zM502 243h4v4h-4zM519 243h4v4h-4zM480 247h4v5h-4zM484 247h5v5h-5zM489 247h4v5h-4zM493 247h4v5h-4zM441 252h4v4h-4zM445 252h5v4h-5zM441 256h4v4h-4zM445 256h5v4h-5zM450 256h4v4h-4zM484 256h5v4h-5zM497 256h5v4h-5zM506 256h4v4h-4zM441 260h4v5h-4zM445 260h5v5h-5zM450 260h4v5h-4zM458 260h5v5h-5zM463 260h4v5h-4zM476 260h4v5h-4zM493 260h4v5h-4zM497 260h5v5h-5zM502 260h4v5h-4zM515 260h4v5h-4zM441 265h4v4h-4zM458 265h5v4h-5zM489 265h4v4h-4zM502 265h4v4h-4zM506 265h4v4h-4zM528 265h4v4h-4zM445 269h5v4h-5zM458 269h5v4h-5zM463 269h4v4h-4zM484 269h5v4h-5zM489 269h4v4h-4zM497 269h5v4h-5zM502 269h4v4h-4zM450 273h4v5h-4zM454 273h4v5h-4zM458 273h5v5h-5zM463 273h4v5h-4zM467 273h4v5h-4zM484 273h5v5h-5zM489 273h4v5h-4zM493 273h4v5h-4zM519 273h4v5h-4zM523 273h5v5h-5zM450 278h4v4h-4zM454 278h4v4h-4zM458 278h5v4h-5zM471 278h5v4h-5zM476 278h4v4h-4zM480 278h4v4h-4zM484 278h5v4h-5zM489 278h4v4h-4zM545 278h4v4h-4zM450 282h4v4h-4zM454 282h4v4h-4zM458 282h5v4h-5zM476 282h4v4h-4zM545 282h4v4h-4zM471 286h5v4h-5zM476 286h4v4h-4zM480 286h4v4h-4zM528 286h4v4h-4zM467 290h4v5h-4zM484 290h5v5h-5zM506 290h4v5h-4zM467 295h4v4h-4zM471 295h5v4h-5zM476 295h4v4h-4zM506 295h4v4h-4zM541 295h4v4h-4zM476 299h4v4h-4zM480 299h4v4h-4zM484 299h5v4h-5zM502 299h4v4h-4zM532 299h4v4h-4zM536 299h5v4h-5zM467 303h4v5h-4zM480 303h4v5h-4zM484 303h5v5h-5zM497 303h5v5h-5zM502 303h4v5h-4zM506 303h4v5h-4zM510 303h5v5h-5zM532 303h4v5h-4zM484 308h5v4h-5zM497 308h5v4h-5zM502 308h4v4h-4zM510 308h5v4h-5zM497 312h5v4h-5zM502 312h4v4h-4zM506 312h4v4h-4zM497 316h5v5h-5z"/>
<path fill="#f0d0a0" d="M480 213h4v4h-4zM497 213h5v4h-5zM502 213h4v4h-4z"/>
<path fill="#401800" d="M484 213h5v4h-5zM484 217h5v4h-5z"/>
<path fill="#d8f0c0" d="M523 213h5v4h-5zM515 217h4v4h-4z"/>
<path fill="#302808" d="M437 217h4v4h-4zM441 217h4v4h-4zM463 234h4v5h-4zM489 299h4v4h-4zM506 299h4v4h-4z"/>
<path fill="#a8a048" d="M476 217h4v4h-4zM480 217h4v4h-4zM497 217h5v4h-5zM502 217h4v4h-4zM471 221h5v5h-5zM441 226h4v4h-4zM450 226h4v4h-4zM458 226h5v4h-5zM471 226h5v4h-5zM493 226h4v4h-4zM497 226h5v4h-5zM502 226h4v4h-4zM510 226h5v4h-5zM523 226h5v4h-5zM450 230h4v4h-4zM454 230h4v4h-4zM458 230h5v4h-5zM497 230h5v4h-5zM502 230h4v4h-4zM523 230h5v4h-5zM458 234h5v5h-5zM471 234h5v5h-5zM476 234h4v5h-4zM458 239h5v4h-5zM471 239h5v4h-5zM476 239h4v4h-4zM480 239h4v4h-4zM493 239h4v4h-4zM458 243h5v4h-5zM463 243h4v4h-4zM467 243h4v4h-4zM476 243h4v4h-4zM450 252h4v4h-4zM502 252h4v4h-4zM502 256h4v4h-4zM532 256h4v4h-4zM454 260h4v5h-4zM463 265h4v4h-4zM484 265h5v4h-5zM523 265h5v4h-5zM506 269h4v4h-4zM510 269h5v4h-5zM523 269h5v4h-5zM445 273h5v5h-5zM445 278h5v4h-5zM493 278h4v4h-4zM506 278h4v4h-4zM536 278h5v4h-5zM493 282h4v4h-4zM497 282h5v4h-5zM463 286h4v4h-4zM484 286h5v4h-5zM489 286h4v4h-4zM489 290h4v5h-4zM493 290h4v5h-4zM523 290h5v5h-5zM489 295h4v4h-4zM510 295h5v4h-5zM523 295h5v4h-5zM545 295h4v4h-4zM471 303h5v5h-5zM519 303h4v5h-4zM523 303h5v5h-5zM528 303h4v5h-4zM471 308h5v4h-5zM519 308h4v4h-4zM523 308h5v4h-5zM480 312h4v4h-4zM484 312h5v4h-5zM489 312h4v4h-4zM493 312h4v4h-4z"/>
<path fill="#98a050" d="M458 221h5v5h-5zM476 221h4v5h-4zM476 226h4v4h-4zM476 230h4v4h-4zM450 234h4v5h-4zM454 234h4v5h-4zM467 234h4v5h-4zM497 247h5v5h-5zM532 247h4v5h-4zM510 252h5v4h-5zM437 256h4v4h-4zM467 265h4v4h-4zM471 265h5v4h-5zM476 265h4v4h-4zM480 265h4v4h-4zM532 273h4v5h-4zM523 278h5v4h-5zM458 286h5v4h-5zM493 286h4v4h-4zM458 290h5v5h-5zM458 295h5v4h-5zM510 299h5v4h-5z"/>
<path fill="#ac5820" d="M493 221h4v5h-4z"/>
<path fill="#f8e8e8" d="M432 226h5v4h-5z"/>
<path fill="#c8c070" d="M437 226h4v4h-4zM445 243h5v4h-5zM445 247h5v5h-5zM471 247h5v5h-5zM476 247h4v5h-4zM502 247h4v5h-4zM506 247h4v5h-4zM510 247h5v5h-5zM528 247h4v5h-4zM471 252h5v4h-5zM476 252h4v4h-4zM506 252h4v4h-4zM476 256h4v4h-4zM510 256h5v4h-5zM515 256h4v4h-4zM471 269h5v4h-5zM519 269h4v4h-4zM471 273h5v5h-5zM476 273h4v5h-4zM463 282h4v4h-4zM467 282h4v4h-4zM471 282h5v4h-5zM523 286h5v4h-5zM471 290h5v5h-5zM528 290h4v5h-4zM545 290h4v5h-4zM493 295h4v4h-4zM497 295h5v4h-5zM476 308h4v4h-4zM480 308h4v4h-4z"/>
<path fill="#e0e4a8" d="M454 226h4v4h-4zM463 230h4v4h-4zM463 239h4v4h-4zM506 243h4v4h-4zM463 252h4v4h-4zM519 256h4v4h-4zM523 256h5v4h-5zM523 260h5v5h-5zM476 269h4v4h-4zM480 269h4v4h-4zM480 273h4v5h-4zM528 278h4v4h-4zM532 278h4v4h-4zM489 282h4v4h-4zM502 282h4v4h-4zM506 282h4v4h-4zM528 282h4v4h-4zM532 282h4v4h-4zM467 286h4v4h-4zM502 286h4v4h-4zM506 286h4v4h-4zM532 286h4v4h-4zM536 286h5v4h-5zM463 290h4v5h-4zM476 290h4v5h-4zM480 290h4v5h-4zM532 290h4v5h-4zM536 290h5v5h-5zM480 295h4v4h-4zM532 295h4v4h-4zM536 295h5v4h-5zM549 295h5v4h-5zM471 299h5v4h-5zM549 303h5v5h-5z"/>
<path fill="#c08878" d="M432 234h5v5h-5z"/>
<path fill="#481408" d="M437 239h4v4h-4zM441 239h4v4h-4zM441 243h4v4h-4z"/>
<path fill="#e0b0a8" d="M432 243h5v4h-5z"/>
<path fill="#582010" d="M437 243h4v4h-4zM437 247h4v5h-4zM441 247h4v5h-4z"/>
<path fill="#584c10" d="M450 243h4v4h-4zM454 243h4v4h-4zM454 247h4v5h-4zM458 247h5v5h-5zM454 252h4v4h-4zM458 252h5v4h-5zM480 252h4v4h-4zM497 252h5v4h-5zM515 265h4v4h-4zM515 269h4v4h-4zM510 290h5v5h-5zM489 303h4v5h-4zM493 303h4v5h-4zM493 308h4v4h-4z"/>
<path fill="#343418" d="M510 278h5v4h-5zM515 278h4v4h-4zM519 278h4v4h-4zM510 282h5v4h-5zM515 282h4v4h-4zM519 282h4v4h-4zM510 286h5v4h-5zM515 286h4v4h-4zM519 286h4v4h-4zM515 290h4v5h-4zM519 290h4v5h-4zM515 295h4v4h-4zM519 295h4v4h-4z"/>
<path fill="#b85828" d="M528 299h4v4h-4zM536 303h5v5h-5zM528 308h4v4h-4zM536 308h5v4h-5zM528 312h4v4h-4zM532 312h4v4h-4zM549 312h5v4h-5zM528 321h4v4h-4zM532 321h4v4h-4zM532 325h4v4h-4zM536 329h5v5h-5zM528 334h4v4h-4zM532 334h4v4h-4zM536 334h5v4h-5zM536 338h5v4h-5z"/>
<path fill="#f0d8b8" d="M541 299h4v4h-4zM541 334h4v4h-4z"/>
<path fill="#f0c8b0" d="M545 299h4v4h-4zM549 299h5v4h-5zM541 303h4v5h-4zM541 308h4v4h-4zM523 312h5v4h-5zM541 312h4v4h-4zM532 316h4v5h-4zM523 321h5v4h-5zM541 325h4v4h-4zM532 329h4v5h-4zM532 342h4v5h-4zM536 342h5v5h-5zM532 347h4v4h-4z"/>
<path fill="#98b080" d="M476 303h4v5h-4zM480 321h4v4h-4zM480 325h4v4h-4zM484 325h5v4h-5zM515 325h4v4h-4zM497 342h5v5h-5zM515 342h4v5h-4zM506 351h4v4h-4zM510 351h5v4h-5zM523 355h5v5h-5zM506 360h4v4h-4z"/>
<path fill="#d8e0b0" d="M545 303h4v5h-4zM545 308h4v4h-4zM549 308h5v4h-5zM545 312h4v4h-4zM510 316h5v5h-5zM515 316h4v5h-4zM519 316h4v5h-4zM523 316h5v5h-5zM528 316h4v5h-4zM502 325h4v4h-4zM506 329h4v5h-4zM510 329h5v5h-5zM515 329h4v5h-4zM523 329h5v5h-5zM506 334h4v4h-4zM523 338h5v4h-5z"/>
<path fill="#e8ecc0" d="M489 308h4v4h-4zM497 325h5v4h-5zM502 334h4v4h-4z"/>
<path fill="#d88848" d="M532 308h4v4h-4zM528 325h4v4h-4zM536 325h5v4h-5zM528 329h4v5h-4zM532 338h4v4h-4z"/>
<path fill="#f0e8a0" d="M476 312h4v4h-4zM476 316h4v5h-4zM480 316h4v5h-4zM506 325h4v4h-4zM502 338h4v4h-4zM510 338h5v4h-5zM510 342h5v5h-5zM528 351h4v4h-4zM506 355h4v5h-4zM510 355h5v5h-5zM510 360h5v4h-5zM519 360h4v4h-4z"/>
<path fill="#789868" d="M510 312h5v4h-5zM484 316h5v5h-5zM541 316h4v5h-4zM545 316h4v5h-4zM549 316h5v5h-5zM484 321h5v4h-5zM541 321h4v4h-4zM523 325h5v4h-5zM515 338h4v4h-4zM519 338h4v4h-4zM502 342h4v5h-4zM502 347h4v4h-4zM519 347h4v4h-4zM523 347h5v4h-5zM528 347h4v4h-4zM502 351h4v4h-4zM515 351h4v4h-4zM519 351h4v4h-4zM523 351h5v4h-5zM502 355h4v5h-4zM515 355h4v5h-4zM502 360h4v4h-4z"/>
<path fill="#a84818" d="M536 312h5v4h-5zM536 316h5v5h-5zM536 321h5v4h-5zM528 338h4v4h-4z"/>
<path fill="#888850" d="M493 316h4v5h-4zM506 316h4v5h-4zM489 325h4v4h-4zM502 329h4v5h-4zM510 334h5v4h-5zM506 342h4v5h-4zM519 342h4v5h-4zM523 342h5v5h-5zM528 342h4v5h-4zM506 347h4v4h-4zM510 347h5v4h-5zM515 347h4v4h-4zM532 351h4v4h-4z"/>
<path fill="#c8d8a0" d="M502 316h4v5h-4zM510 321h5v4h-5zM515 321h4v4h-4zM519 321h4v4h-4zM510 325h5v4h-5zM519 325h4v4h-4zM489 329h4v5h-4zM519 329h4v5h-4zM515 334h4v4h-4zM519 334h4v4h-4zM506 338h4v4h-4zM519 355h4v5h-4z"/>
<path fill="#e0a880" d="M545 321h4v4h-4zM545 325h4v4h-4zM523 334h5v4h-5z"/>
<path fill="#d0d8f0" d="M486 381.5h4.3v4.3h-4.3z"/>
<path fill="#9098d0" d="M490.3 381.5h4.3v4.3h-4.3z"/>
<path fill="#c0c8f0" d="M503.5 381.5h4.3v4.3h-4.3z"/>
<path fill="#7078c0" d="M482 385.8h4.3v4.3h-4.3z"/>
</svg>
<svg class="a" style="left:0;top:0;width:650px;height:458px" viewBox="0 0 650 458">
<clipPath id="mc"><rect x="203.0" y="61.0" width="371.0" height="356.5"/></clipPath><g clip-path="url(#mc)">
<polyline points="523,60 509,79 497,93 491,108 490,126 492.5,143 498,158 503,173 510,187 517.5,198 526,215 529,233 537,251 543,268 550,283 555,295 555,310 551,320 544,334 538,349 532,359 517.5,364 504,362 501,349 497,337 482,328 473,316.5 464.5,302 454,290 447,280 441,262.5 433.6,248 432,233 438,215 435,198 426,189 414.5,180 408.6,175.8 396.8,164 385,152 376.7,150.7 365,155 347,161 338.4,170 323.7,168 317.8,164 313.4,152 303,146 288,140.4 273.6,136 259,139 238,137.5 229.5,139 213,142" fill="none" stroke="#0c0c10" stroke-width=".6" stroke-opacity=".75"/>
<path d="M526 60 512 80 500 95 494 110 493 127 496 145 502 160 507 175 514 189 522 200 530 216 533 233 540 250 547 268 553 283 558 296" fill="none" stroke="#101018" stroke-width=".5" stroke-opacity=".7"/>
<path d="M521 62 512 66M518 66 508 71M515 71 505 76M511 76 503 81M508 81 500 86M505 86 498 91M502 91 496 96" fill="none" stroke="#101010" stroke-width=".5" stroke-opacity=".7"/>
<path d="M337 61 334 72.7 336 84 335.5 96 338.4 108 341 114 344.3 121.3 360 122.5 390 124 420 125.3 458.6 127 460 133 461.6 136 466 134.5 467 126 467.5 118 475 117.5 482 118 488 122.7 491 124" fill="none" stroke="#101008" stroke-width=".75"/>
<path d="M335.5 110.4 226.5 109.5 225 114 228 121 232.4 127 235 136" fill="none" stroke="#101008" stroke-width=".75"/>
<path d="M436 225 440 232 438 240 434 246 437 250M214 126 210 132 214 140 222 141M247 134 252 131 258 134M300 143 308 146 314 150 318 158M478 318 486 326 496 333 501 345 506 356 514 360M462 292 468 300 472 308" fill="none" stroke="#0c0c0c" stroke-width=".65" stroke-opacity=".8"/>
<path d="M370.6 63.0a1.7 1.7 0 1 0 3.4 0a1.7 1.7 0 1 0-3.4 0zM330.3 69.7a1.7 1.7 0 1 0 3.4 0a1.7 1.7 0 1 0-3.4 0zM294.9 74.0a1.7 1.7 0 1 0 3.4 0a1.7 1.7 0 1 0-3.4 0zM372.1 84.5a1.7 1.7 0 1 0 3.4 0a1.7 1.7 0 1 0-3.4 0zM308.8 90.3a1.7 1.7 0 1 0 3.4 0a1.7 1.7 0 1 0-3.4 0zM300.5 94.8a1.7 1.7 0 1 0 3.4 0a1.7 1.7 0 1 0-3.4 0zM319.1 99.2a1.7 1.7 0 1 0 3.4 0a1.7 1.7 0 1 0-3.4 0zM355.0 113.3a1.7 1.7 0 1 0 3.4 0a1.7 1.7 0 1 0-3.4 0zM380.9 116.0a1.7 1.7 0 1 0 3.4 0a1.7 1.7 0 1 0-3.4 0zM202.7 116.9a1.7 1.7 0 1 0 3.4 0a1.7 1.7 0 1 0-3.4 0zM203.6 123.3a1.7 1.7 0 1 0 3.4 0a1.7 1.7 0 1 0-3.4 0zM211.6 125.0a1.7 1.7 0 1 0 3.4 0a1.7 1.7 0 1 0-3.4 0zM272.5 129.2a1.7 1.7 0 1 0 3.4 0a1.7 1.7 0 1 0-3.4 0zM266.6 133.4a1.7 1.7 0 1 0 3.4 0a1.7 1.7 0 1 0-3.4 0zM367.7 132.5a1.7 1.7 0 1 0 3.4 0a1.7 1.7 0 1 0-3.4 0zM307.3 144.8a1.7 1.7 0 1 0 3.4 0a1.7 1.7 0 1 0-3.4 0zM311.7 144.8a1.7 1.7 0 1 0 3.4 0a1.7 1.7 0 1 0-3.4 0zM389.8 67.4a1.7 1.7 0 1 0 3.4 0a1.7 1.7 0 1 0-3.4 0zM483.4 71.2a1.7 1.7 0 1 0 3.4 0a1.7 1.7 0 1 0-3.4 0zM484.1 73.0a1.7 1.7 0 1 0 3.4 0a1.7 1.7 0 1 0-3.4 0zM504.1 65.3a1.7 1.7 0 1 0 3.4 0a1.7 1.7 0 1 0-3.4 0zM510.8 66.2a1.7 1.7 0 1 0 3.4 0a1.7 1.7 0 1 0-3.4 0zM401.0 88.9a1.7 1.7 0 1 0 3.4 0a1.7 1.7 0 1 0-3.4 0zM429.5 86.8a1.7 1.7 0 1 0 3.4 0a1.7 1.7 0 1 0-3.4 0zM389.8 102.1a1.7 1.7 0 1 0 3.4 0a1.7 1.7 0 1 0-3.4 0zM451.0 100.0a1.7 1.7 0 1 0 3.4 0a1.7 1.7 0 1 0-3.4 0zM489.3 102.7a1.7 1.7 0 1 0 3.4 0a1.7 1.7 0 1 0-3.4 0zM493.2 101.2a1.7 1.7 0 1 0 3.4 0a1.7 1.7 0 1 0-3.4 0zM411.3 116.0a1.7 1.7 0 1 0 3.4 0a1.7 1.7 0 1 0-3.4 0zM438.7 143.4a1.7 1.7 0 1 0 3.4 0a1.7 1.7 0 1 0-3.4 0zM481.3 138.4a1.7 1.7 0 1 0 3.4 0a1.7 1.7 0 1 0-3.4 0zM477.6 145.7a1.7 1.7 0 1 0 3.4 0a1.7 1.7 0 1 0-3.4 0zM478.8 144.0a1.7 1.7 0 1 0 3.4 0a1.7 1.7 0 1 0-3.4 0zM490.8 138.2a1.7 1.7 0 1 0 3.4 0a1.7 1.7 0 1 0-3.4 0zM490.8 140.2a1.7 1.7 0 1 0 3.4 0a1.7 1.7 0 1 0-3.4 0zM496.1 157.2a1.7 1.7 0 1 0 3.4 0a1.7 1.7 0 1 0-3.4 0zM451.6 166.3a1.7 1.7 0 1 0 3.4 0a1.7 1.7 0 1 0-3.4 0zM481.3 167.5a1.7 1.7 0 1 0 3.4 0a1.7 1.7 0 1 0-3.4 0zM500.5 170.8a1.7 1.7 0 1 0 3.4 0a1.7 1.7 0 1 0-3.4 0zM460.8 187.5a1.7 1.7 0 1 0 3.4 0a1.7 1.7 0 1 0-3.4 0zM505.5 183.0a1.7 1.7 0 1 0 3.4 0a1.7 1.7 0 1 0-3.4 0zM508.3 186.0a1.7 1.7 0 1 0 3.4 0a1.7 1.7 0 1 0-3.4 0zM461.3 187.4a1.7 1.7 0 1 0 3.4 0a1.7 1.7 0 1 0-3.4 0zM496.7 194.0a1.7 1.7 0 1 0 3.4 0a1.7 1.7 0 1 0-3.4 0zM500.5 199.0a1.7 1.7 0 1 0 3.4 0a1.7 1.7 0 1 0-3.4 0zM480.5 202.0a1.7 1.7 0 1 0 3.4 0a1.7 1.7 0 1 0-3.4 0zM471.7 204.0a1.7 1.7 0 1 0 3.4 0a1.7 1.7 0 1 0-3.4 0zM442.3 217.7a1.7 1.7 0 1 0 3.4 0a1.7 1.7 0 1 0-3.4 0zM493.8 224.0a1.7 1.7 0 1 0 3.4 0a1.7 1.7 0 1 0-3.4 0zM496.7 228.6a1.7 1.7 0 1 0 3.4 0a1.7 1.7 0 1 0-3.4 0zM517.3 213.9a1.7 1.7 0 1 0 3.4 0a1.7 1.7 0 1 0-3.4 0zM521.7 224.0a1.7 1.7 0 1 0 3.4 0a1.7 1.7 0 1 0-3.4 0zM526.2 230.0a1.7 1.7 0 1 0 3.4 0a1.7 1.7 0 1 0-3.4 0zM526.2 234.5a1.7 1.7 0 1 0 3.4 0a1.7 1.7 0 1 0-3.4 0zM524.7 239.0a1.7 1.7 0 1 0 3.4 0a1.7 1.7 0 1 0-3.4 0zM468.7 237.4a1.7 1.7 0 1 0 3.4 0a1.7 1.7 0 1 0-3.4 0zM461.3 239.0a1.7 1.7 0 1 0 3.4 0a1.7 1.7 0 1 0-3.4 0zM483.4 234.5a1.7 1.7 0 1 0 3.4 0a1.7 1.7 0 1 0-3.4 0zM479.0 237.4a1.7 1.7 0 1 0 3.4 0a1.7 1.7 0 1 0-3.4 0zM473.1 242.7a1.7 1.7 0 1 0 3.4 0a1.7 1.7 0 1 0-3.4 0zM455.3 242.7a1.7 1.7 0 1 0 3.4 0a1.7 1.7 0 1 0-3.4 0zM532.6 248.3a1.7 1.7 0 1 0 3.4 0a1.7 1.7 0 1 0-3.4 0zM535.0 255.0a1.7 1.7 0 1 0 3.4 0a1.7 1.7 0 1 0-3.4 0zM538.5 262.5a1.7 1.7 0 1 0 3.4 0a1.7 1.7 0 1 0-3.4 0zM537.9 269.0a1.7 1.7 0 1 0 3.4 0a1.7 1.7 0 1 0-3.4 0zM538.5 274.0a1.7 1.7 0 1 0 3.4 0a1.7 1.7 0 1 0-3.4 0zM542.3 273.7a1.7 1.7 0 1 0 3.4 0a1.7 1.7 0 1 0-3.4 0zM546.8 278.7a1.7 1.7 0 1 0 3.4 0a1.7 1.7 0 1 0-3.4 0zM548.3 284.6a1.7 1.7 0 1 0 3.4 0a1.7 1.7 0 1 0-3.4 0zM549.7 290.5a1.7 1.7 0 1 0 3.4 0a1.7 1.7 0 1 0-3.4 0zM551.7 297.8a1.7 1.7 0 1 0 3.4 0a1.7 1.7 0 1 0-3.4 0zM544.7 295.8a1.7 1.7 0 1 0 3.4 0a1.7 1.7 0 1 0-3.4 0zM524.1 295.8a1.7 1.7 0 1 0 3.4 0a1.7 1.7 0 1 0-3.4 0zM443.7 267.0a1.7 1.7 0 1 0 3.4 0a1.7 1.7 0 1 0-3.4 0zM446.6 271.0a1.7 1.7 0 1 0 3.4 0a1.7 1.7 0 1 0-3.4 0zM448.1 278.7a1.7 1.7 0 1 0 3.4 0a1.7 1.7 0 1 0-3.4 0zM451.6 283.7a1.7 1.7 0 1 0 3.4 0a1.7 1.7 0 1 0-3.4 0zM458.3 280.0a1.7 1.7 0 1 0 3.4 0a1.7 1.7 0 1 0-3.4 0zM462.8 283.0a1.7 1.7 0 1 0 3.4 0a1.7 1.7 0 1 0-3.4 0zM471.7 295.0a1.7 1.7 0 1 0 3.4 0a1.7 1.7 0 1 0-3.4 0zM467.3 297.8a1.7 1.7 0 1 0 3.4 0a1.7 1.7 0 1 0-3.4 0zM470.2 302.0a1.7 1.7 0 1 0 3.4 0a1.7 1.7 0 1 0-3.4 0zM474.6 305.0a1.7 1.7 0 1 0 3.4 0a1.7 1.7 0 1 0-3.4 0zM482.0 299.3a1.7 1.7 0 1 0 3.4 0a1.7 1.7 0 1 0-3.4 0zM476.1 309.6a1.7 1.7 0 1 0 3.4 0a1.7 1.7 0 1 0-3.4 0zM491.7 307.0a1.7 1.7 0 1 0 3.4 0a1.7 1.7 0 1 0-3.4 0zM476.1 318.0a1.7 1.7 0 1 0 3.4 0a1.7 1.7 0 1 0-3.4 0zM479.0 317.0a1.7 1.7 0 1 0 3.4 0a1.7 1.7 0 1 0-3.4 0zM475.3 320.0a1.7 1.7 0 1 0 3.4 0a1.7 1.7 0 1 0-3.4 0zM533.5 363.6a1.7 1.7 0 1 0 3.4 0a1.7 1.7 0 1 0-3.4 0zM476.7 387.2a1.7 1.7 0 1 0 3.4 0a1.7 1.7 0 1 0-3.4 0zM237.7 132.7a1.7 1.7 0 1 0 3.4 0a1.7 1.7 0 1 0-3.4 0zM238.5 133.0a1.7 1.7 0 1 0 3.4 0a1.7 1.7 0 1 0-3.4 0zM240.1 130.3a1.7 1.7 0 1 0 3.4 0a1.7 1.7 0 1 0-3.4 0zM236.4 134.2a1.7 1.7 0 1 0 3.4 0a1.7 1.7 0 1 0-3.4 0zM237.9 131.2a1.7 1.7 0 1 0 3.4 0a1.7 1.7 0 1 0-3.4 0zM242.3 132.4a1.7 1.7 0 1 0 3.4 0a1.7 1.7 0 1 0-3.4 0zM241.3 132.4a1.7 1.7 0 1 0 3.4 0a1.7 1.7 0 1 0-3.4 0zM240.1 130.8a1.7 1.7 0 1 0 3.4 0a1.7 1.7 0 1 0-3.4 0zM240.1 134.3a1.7 1.7 0 1 0 3.4 0a1.7 1.7 0 1 0-3.4 0zM488.6 210.4a1.7 1.7 0 1 0 3.4 0a1.7 1.7 0 1 0-3.4 0zM493.2 210.2a1.7 1.7 0 1 0 3.4 0a1.7 1.7 0 1 0-3.4 0zM494.0 207.5a1.7 1.7 0 1 0 3.4 0a1.7 1.7 0 1 0-3.4 0zM493.5 211.6a1.7 1.7 0 1 0 3.4 0a1.7 1.7 0 1 0-3.4 0zM496.2 208.8a1.7 1.7 0 1 0 3.4 0a1.7 1.7 0 1 0-3.4 0zM492.5 205.8a1.7 1.7 0 1 0 3.4 0a1.7 1.7 0 1 0-3.4 0zM492.2 205.3a1.7 1.7 0 1 0 3.4 0a1.7 1.7 0 1 0-3.4 0zM489.3 213.9a1.7 1.7 0 1 0 3.4 0a1.7 1.7 0 1 0-3.4 0zM486.8 213.1a1.7 1.7 0 1 0 3.4 0a1.7 1.7 0 1 0-3.4 0zM494.8 210.2a1.7 1.7 0 1 0 3.4 0a1.7 1.7 0 1 0-3.4 0zM495.3 212.4a1.7 1.7 0 1 0 3.4 0a1.7 1.7 0 1 0-3.4 0zM497.1 210.4a1.7 1.7 0 1 0 3.4 0a1.7 1.7 0 1 0-3.4 0zM491.9 209.4a1.7 1.7 0 1 0 3.4 0a1.7 1.7 0 1 0-3.4 0zM490.6 210.9a1.7 1.7 0 1 0 3.4 0a1.7 1.7 0 1 0-3.4 0zM491.3 213.8a1.7 1.7 0 1 0 3.4 0a1.7 1.7 0 1 0-3.4 0zM487.8 208.2a1.7 1.7 0 1 0 3.4 0a1.7 1.7 0 1 0-3.4 0zM490.7 205.6a1.7 1.7 0 1 0 3.4 0a1.7 1.7 0 1 0-3.4 0zM499.9 204.7a1.7 1.7 0 1 0 3.4 0a1.7 1.7 0 1 0-3.4 0zM492.9 209.6a1.7 1.7 0 1 0 3.4 0a1.7 1.7 0 1 0-3.4 0zM499.1 205.8a1.7 1.7 0 1 0 3.4 0a1.7 1.7 0 1 0-3.4 0zM497.2 209.1a1.7 1.7 0 1 0 3.4 0a1.7 1.7 0 1 0-3.4 0zM493.3 209.3a1.7 1.7 0 1 0 3.4 0a1.7 1.7 0 1 0-3.4 0zM446.5 228.9a1.7 1.7 0 1 0 3.4 0a1.7 1.7 0 1 0-3.4 0zM442.9 235.6a1.7 1.7 0 1 0 3.4 0a1.7 1.7 0 1 0-3.4 0zM452.5 223.2a1.7 1.7 0 1 0 3.4 0a1.7 1.7 0 1 0-3.4 0zM450.9 238.3a1.7 1.7 0 1 0 3.4 0a1.7 1.7 0 1 0-3.4 0zM440.9 235.4a1.7 1.7 0 1 0 3.4 0a1.7 1.7 0 1 0-3.4 0zM441.0 241.4a1.7 1.7 0 1 0 3.4 0a1.7 1.7 0 1 0-3.4 0zM444.3 233.0a1.7 1.7 0 1 0 3.4 0a1.7 1.7 0 1 0-3.4 0zM442.2 233.1a1.7 1.7 0 1 0 3.4 0a1.7 1.7 0 1 0-3.4 0zM442.4 230.0a1.7 1.7 0 1 0 3.4 0a1.7 1.7 0 1 0-3.4 0zM453.6 225.4a1.7 1.7 0 1 0 3.4 0a1.7 1.7 0 1 0-3.4 0zM425.3 233.4a1.7 1.7 0 1 0 3.4 0a1.7 1.7 0 1 0-3.4 0zM442.6 235.7a1.7 1.7 0 1 0 3.4 0a1.7 1.7 0 1 0-3.4 0zM442.3 233.3a1.7 1.7 0 1 0 3.4 0a1.7 1.7 0 1 0-3.4 0zM445.0 238.4a1.7 1.7 0 1 0 3.4 0a1.7 1.7 0 1 0-3.4 0zM441.1 232.3a1.7 1.7 0 1 0 3.4 0a1.7 1.7 0 1 0-3.4 0zM453.0 236.4a1.7 1.7 0 1 0 3.4 0a1.7 1.7 0 1 0-3.4 0zM438.4 244.5a1.7 1.7 0 1 0 3.4 0a1.7 1.7 0 1 0-3.4 0zM447.2 231.3a1.7 1.7 0 1 0 3.4 0a1.7 1.7 0 1 0-3.4 0zM437.4 235.3a1.7 1.7 0 1 0 3.4 0a1.7 1.7 0 1 0-3.4 0zM439.1 229.2a1.7 1.7 0 1 0 3.4 0a1.7 1.7 0 1 0-3.4 0zM436.8 231.7a1.7 1.7 0 1 0 3.4 0a1.7 1.7 0 1 0-3.4 0zM448.8 232.0a1.7 1.7 0 1 0 3.4 0a1.7 1.7 0 1 0-3.4 0zM436.1 237.0a1.7 1.7 0 1 0 3.4 0a1.7 1.7 0 1 0-3.4 0zM443.6 237.8a1.7 1.7 0 1 0 3.4 0a1.7 1.7 0 1 0-3.4 0zM449.3 233.2a1.7 1.7 0 1 0 3.4 0a1.7 1.7 0 1 0-3.4 0zM442.6 233.8a1.7 1.7 0 1 0 3.4 0a1.7 1.7 0 1 0-3.4 0zM437.6 237.0a1.7 1.7 0 1 0 3.4 0a1.7 1.7 0 1 0-3.4 0zM450.2 234.8a1.7 1.7 0 1 0 3.4 0a1.7 1.7 0 1 0-3.4 0zM442.1 232.8a1.7 1.7 0 1 0 3.4 0a1.7 1.7 0 1 0-3.4 0zM439.4 230.4a1.7 1.7 0 1 0 3.4 0a1.7 1.7 0 1 0-3.4 0zM432.5 237.9a1.7 1.7 0 1 0 3.4 0a1.7 1.7 0 1 0-3.4 0zM433.5 238.6a1.7 1.7 0 1 0 3.4 0a1.7 1.7 0 1 0-3.4 0zM434.9 223.5a1.7 1.7 0 1 0 3.4 0a1.7 1.7 0 1 0-3.4 0zM434.3 237.9a1.7 1.7 0 1 0 3.4 0a1.7 1.7 0 1 0-3.4 0zM434.9 228.5a1.7 1.7 0 1 0 3.4 0a1.7 1.7 0 1 0-3.4 0zM432.8 236.0a1.7 1.7 0 1 0 3.4 0a1.7 1.7 0 1 0-3.4 0zM433.9 231.0a1.7 1.7 0 1 0 3.4 0a1.7 1.7 0 1 0-3.4 0zM434.7 231.1a1.7 1.7 0 1 0 3.4 0a1.7 1.7 0 1 0-3.4 0zM434.4 229.6a1.7 1.7 0 1 0 3.4 0a1.7 1.7 0 1 0-3.4 0zM431.0 240.0a1.7 1.7 0 1 0 3.4 0a1.7 1.7 0 1 0-3.4 0zM434.2 235.5a1.7 1.7 0 1 0 3.4 0a1.7 1.7 0 1 0-3.4 0zM433.9 229.8a1.7 1.7 0 1 0 3.4 0a1.7 1.7 0 1 0-3.4 0zM431.5 240.7a1.7 1.7 0 1 0 3.4 0a1.7 1.7 0 1 0-3.4 0zM435.2 227.1a1.7 1.7 0 1 0 3.4 0a1.7 1.7 0 1 0-3.4 0zM504.0 182.9a1.7 1.7 0 1 0 3.4 0a1.7 1.7 0 1 0-3.4 0zM506.0 185.3a1.7 1.7 0 1 0 3.4 0a1.7 1.7 0 1 0-3.4 0zM509.3 190.1a1.7 1.7 0 1 0 3.4 0a1.7 1.7 0 1 0-3.4 0zM510.7 193.5a1.7 1.7 0 1 0 3.4 0a1.7 1.7 0 1 0-3.4 0zM513.1 195.5a1.7 1.7 0 1 0 3.4 0a1.7 1.7 0 1 0-3.4 0zM515.4 200.4a1.7 1.7 0 1 0 3.4 0a1.7 1.7 0 1 0-3.4 0zM515.4 202.0a1.7 1.7 0 1 0 3.4 0a1.7 1.7 0 1 0-3.4 0zM517.7 206.2a1.7 1.7 0 1 0 3.4 0a1.7 1.7 0 1 0-3.4 0zM521.3 210.4a1.7 1.7 0 1 0 3.4 0a1.7 1.7 0 1 0-3.4 0zM520.8 212.1a1.7 1.7 0 1 0 3.4 0a1.7 1.7 0 1 0-3.4 0zM523.5 217.3a1.7 1.7 0 1 0 3.4 0a1.7 1.7 0 1 0-3.4 0zM523.4 220.9a1.7 1.7 0 1 0 3.4 0a1.7 1.7 0 1 0-3.4 0zM523.6 222.6a1.7 1.7 0 1 0 3.4 0a1.7 1.7 0 1 0-3.4 0zM524.4 228.1a1.7 1.7 0 1 0 3.4 0a1.7 1.7 0 1 0-3.4 0zM525.2 230.4a1.7 1.7 0 1 0 3.4 0a1.7 1.7 0 1 0-3.4 0zM526.1 234.2a1.7 1.7 0 1 0 3.4 0a1.7 1.7 0 1 0-3.4 0zM527.8 239.3a1.7 1.7 0 1 0 3.4 0a1.7 1.7 0 1 0-3.4 0zM530.1 240.2a1.7 1.7 0 1 0 3.4 0a1.7 1.7 0 1 0-3.4 0zM532.9 246.3a1.7 1.7 0 1 0 3.4 0a1.7 1.7 0 1 0-3.4 0zM533.8 248.7a1.7 1.7 0 1 0 3.4 0a1.7 1.7 0 1 0-3.4 0zM534.0 253.5a1.7 1.7 0 1 0 3.4 0a1.7 1.7 0 1 0-3.4 0zM536.5 256.4a1.7 1.7 0 1 0 3.4 0a1.7 1.7 0 1 0-3.4 0zM536.9 259.6a1.7 1.7 0 1 0 3.4 0a1.7 1.7 0 1 0-3.4 0zM537.3 262.0a1.7 1.7 0 1 0 3.4 0a1.7 1.7 0 1 0-3.4 0zM537.8 265.2a1.7 1.7 0 1 0 3.4 0a1.7 1.7 0 1 0-3.4 0zM539.9 269.4a1.7 1.7 0 1 0 3.4 0a1.7 1.7 0 1 0-3.4 0zM541.0 272.9a1.7 1.7 0 1 0 3.4 0a1.7 1.7 0 1 0-3.4 0zM544.1 276.2a1.7 1.7 0 1 0 3.4 0a1.7 1.7 0 1 0-3.4 0zM546.0 279.2a1.7 1.7 0 1 0 3.4 0a1.7 1.7 0 1 0-3.4 0zM546.6 282.2a1.7 1.7 0 1 0 3.4 0a1.7 1.7 0 1 0-3.4 0zM547.4 283.0a1.7 1.7 0 1 0 3.4 0a1.7 1.7 0 1 0-3.4 0zM547.2 285.7a1.7 1.7 0 1 0 3.4 0a1.7 1.7 0 1 0-3.4 0zM548.9 289.1a1.7 1.7 0 1 0 3.4 0a1.7 1.7 0 1 0-3.4 0zM550.5 291.0a1.7 1.7 0 1 0 3.4 0a1.7 1.7 0 1 0-3.4 0zM550.0 293.8a1.7 1.7 0 1 0 3.4 0a1.7 1.7 0 1 0-3.4 0zM549.1 305.9a1.7 1.7 0 1 0 3.4 0a1.7 1.7 0 1 0-3.4 0zM535.7 335.0a1.7 1.7 0 1 0 3.4 0a1.7 1.7 0 1 0-3.4 0zM544.9 311.4a1.7 1.7 0 1 0 3.4 0a1.7 1.7 0 1 0-3.4 0zM539.6 336.9a1.7 1.7 0 1 0 3.4 0a1.7 1.7 0 1 0-3.4 0zM550.0 301.4a1.7 1.7 0 1 0 3.4 0a1.7 1.7 0 1 0-3.4 0zM532.4 336.3a1.7 1.7 0 1 0 3.4 0a1.7 1.7 0 1 0-3.4 0zM540.0 337.3a1.7 1.7 0 1 0 3.4 0a1.7 1.7 0 1 0-3.4 0zM536.5 339.4a1.7 1.7 0 1 0 3.4 0a1.7 1.7 0 1 0-3.4 0zM550.3 294.7a1.7 1.7 0 1 0 3.4 0a1.7 1.7 0 1 0-3.4 0zM543.1 321.0a1.7 1.7 0 1 0 3.4 0a1.7 1.7 0 1 0-3.4 0zM539.2 315.3a1.7 1.7 0 1 0 3.4 0a1.7 1.7 0 1 0-3.4 0zM551.9 292.1a1.7 1.7 0 1 0 3.4 0a1.7 1.7 0 1 0-3.4 0zM551.3 295.0a1.7 1.7 0 1 0 3.4 0a1.7 1.7 0 1 0-3.4 0zM551.1 295.8a1.7 1.7 0 1 0 3.4 0a1.7 1.7 0 1 0-3.4 0zM535.2 345.6a1.7 1.7 0 1 0 3.4 0a1.7 1.7 0 1 0-3.4 0zM541.0 319.6a1.7 1.7 0 1 0 3.4 0a1.7 1.7 0 1 0-3.4 0zM543.8 309.4a1.7 1.7 0 1 0 3.4 0a1.7 1.7 0 1 0-3.4 0zM541.5 327.6a1.7 1.7 0 1 0 3.4 0a1.7 1.7 0 1 0-3.4 0zM539.6 324.3a1.7 1.7 0 1 0 3.4 0a1.7 1.7 0 1 0-3.4 0zM545.5 310.1a1.7 1.7 0 1 0 3.4 0a1.7 1.7 0 1 0-3.4 0zM546.2 298.8a1.7 1.7 0 1 0 3.4 0a1.7 1.7 0 1 0-3.4 0zM542.4 312.9a1.7 1.7 0 1 0 3.4 0a1.7 1.7 0 1 0-3.4 0zM551.0 296.4a1.7 1.7 0 1 0 3.4 0a1.7 1.7 0 1 0-3.4 0zM542.1 325.2a1.7 1.7 0 1 0 3.4 0a1.7 1.7 0 1 0-3.4 0zM534.7 335.0a1.7 1.7 0 1 0 3.4 0a1.7 1.7 0 1 0-3.4 0zM542.7 326.3a1.7 1.7 0 1 0 3.4 0a1.7 1.7 0 1 0-3.4 0zM541.0 315.7a1.7 1.7 0 1 0 3.4 0a1.7 1.7 0 1 0-3.4 0zM540.6 330.7a1.7 1.7 0 1 0 3.4 0a1.7 1.7 0 1 0-3.4 0zM542.2 315.1a1.7 1.7 0 1 0 3.4 0a1.7 1.7 0 1 0-3.4 0zM545.3 305.5a1.7 1.7 0 1 0 3.4 0a1.7 1.7 0 1 0-3.4 0zM541.0 321.5a1.7 1.7 0 1 0 3.4 0a1.7 1.7 0 1 0-3.4 0zM542.1 315.4a1.7 1.7 0 1 0 3.4 0a1.7 1.7 0 1 0-3.4 0zM546.7 315.4a1.7 1.7 0 1 0 3.4 0a1.7 1.7 0 1 0-3.4 0zM540.1 312.6a1.7 1.7 0 1 0 3.4 0a1.7 1.7 0 1 0-3.4 0zM536.3 341.4a1.7 1.7 0 1 0 3.4 0a1.7 1.7 0 1 0-3.4 0zM540.7 317.5a1.7 1.7 0 1 0 3.4 0a1.7 1.7 0 1 0-3.4 0zM550.7 298.8a1.7 1.7 0 1 0 3.4 0a1.7 1.7 0 1 0-3.4 0zM533.0 340.8a1.7 1.7 0 1 0 3.4 0a1.7 1.7 0 1 0-3.4 0zM535.6 335.6a1.7 1.7 0 1 0 3.4 0a1.7 1.7 0 1 0-3.4 0zM537.7 323.0a1.7 1.7 0 1 0 3.4 0a1.7 1.7 0 1 0-3.4 0zM549.6 297.7a1.7 1.7 0 1 0 3.4 0a1.7 1.7 0 1 0-3.4 0zM549.0 299.9a1.7 1.7 0 1 0 3.4 0a1.7 1.7 0 1 0-3.4 0zM538.6 334.6a1.7 1.7 0 1 0 3.4 0a1.7 1.7 0 1 0-3.4 0zM550.1 297.5a1.7 1.7 0 1 0 3.4 0a1.7 1.7 0 1 0-3.4 0zM536.3 340.4a1.7 1.7 0 1 0 3.4 0a1.7 1.7 0 1 0-3.4 0zM537.1 338.3a1.7 1.7 0 1 0 3.4 0a1.7 1.7 0 1 0-3.4 0zM551.3 298.7a1.7 1.7 0 1 0 3.4 0a1.7 1.7 0 1 0-3.4 0zM534.0 338.0a1.7 1.7 0 1 0 3.4 0a1.7 1.7 0 1 0-3.4 0zM531.6 344.4a1.7 1.7 0 1 0 3.4 0a1.7 1.7 0 1 0-3.4 0zM548.9 294.0a1.7 1.7 0 1 0 3.4 0a1.7 1.7 0 1 0-3.4 0zM534.3 334.2a1.7 1.7 0 1 0 3.4 0a1.7 1.7 0 1 0-3.4 0zM549.5 297.9a1.7 1.7 0 1 0 3.4 0a1.7 1.7 0 1 0-3.4 0zM538.8 333.2a1.7 1.7 0 1 0 3.4 0a1.7 1.7 0 1 0-3.4 0zM544.1 309.8a1.7 1.7 0 1 0 3.4 0a1.7 1.7 0 1 0-3.4 0zM541.6 323.0a1.7 1.7 0 1 0 3.4 0a1.7 1.7 0 1 0-3.4 0zM547.2 301.9a1.7 1.7 0 1 0 3.4 0a1.7 1.7 0 1 0-3.4 0zM544.8 305.7a1.7 1.7 0 1 0 3.4 0a1.7 1.7 0 1 0-3.4 0zM540.9 313.7a1.7 1.7 0 1 0 3.4 0a1.7 1.7 0 1 0-3.4 0zM542.2 312.2a1.7 1.7 0 1 0 3.4 0a1.7 1.7 0 1 0-3.4 0zM544.3 315.0a1.7 1.7 0 1 0 3.4 0a1.7 1.7 0 1 0-3.4 0zM544.1 296.6a1.7 1.7 0 1 0 3.4 0a1.7 1.7 0 1 0-3.4 0zM543.1 314.7a1.7 1.7 0 1 0 3.4 0a1.7 1.7 0 1 0-3.4 0zM539.9 333.1a1.7 1.7 0 1 0 3.4 0a1.7 1.7 0 1 0-3.4 0zM540.8 333.6a1.7 1.7 0 1 0 3.4 0a1.7 1.7 0 1 0-3.4 0zM536.7 329.1a1.7 1.7 0 1 0 3.4 0a1.7 1.7 0 1 0-3.4 0zM539.4 327.4a1.7 1.7 0 1 0 3.4 0a1.7 1.7 0 1 0-3.4 0zM536.4 341.4a1.7 1.7 0 1 0 3.4 0a1.7 1.7 0 1 0-3.4 0zM538.9 333.1a1.7 1.7 0 1 0 3.4 0a1.7 1.7 0 1 0-3.4 0zM533.2 342.4a1.7 1.7 0 1 0 3.4 0a1.7 1.7 0 1 0-3.4 0zM538.3 331.5a1.7 1.7 0 1 0 3.4 0a1.7 1.7 0 1 0-3.4 0zM548.3 302.2a1.7 1.7 0 1 0 3.4 0a1.7 1.7 0 1 0-3.4 0zM542.0 324.2a1.7 1.7 0 1 0 3.4 0a1.7 1.7 0 1 0-3.4 0zM545.0 309.3a1.7 1.7 0 1 0 3.4 0a1.7 1.7 0 1 0-3.4 0zM538.4 344.4a1.7 1.7 0 1 0 3.4 0a1.7 1.7 0 1 0-3.4 0zM546.2 308.3a1.7 1.7 0 1 0 3.4 0a1.7 1.7 0 1 0-3.4 0zM534.3 339.0a1.7 1.7 0 1 0 3.4 0a1.7 1.7 0 1 0-3.4 0zM540.4 324.2a1.7 1.7 0 1 0 3.4 0a1.7 1.7 0 1 0-3.4 0zM552.5 293.3a1.7 1.7 0 1 0 3.4 0a1.7 1.7 0 1 0-3.4 0zM541.1 318.4a1.7 1.7 0 1 0 3.4 0a1.7 1.7 0 1 0-3.4 0zM544.8 311.8a1.7 1.7 0 1 0 3.4 0a1.7 1.7 0 1 0-3.4 0zM544.7 309.7a1.7 1.7 0 1 0 3.4 0a1.7 1.7 0 1 0-3.4 0zM533.2 346.5a1.7 1.7 0 1 0 3.4 0a1.7 1.7 0 1 0-3.4 0zM540.1 318.4a1.7 1.7 0 1 0 3.4 0a1.7 1.7 0 1 0-3.4 0zM535.3 337.9a1.7 1.7 0 1 0 3.4 0a1.7 1.7 0 1 0-3.4 0zM534.6 337.2a1.7 1.7 0 1 0 3.4 0a1.7 1.7 0 1 0-3.4 0zM537.6 331.6a1.7 1.7 0 1 0 3.4 0a1.7 1.7 0 1 0-3.4 0zM533.6 339.1a1.7 1.7 0 1 0 3.4 0a1.7 1.7 0 1 0-3.4 0zM537.0 344.8a1.7 1.7 0 1 0 3.4 0a1.7 1.7 0 1 0-3.4 0zM542.5 317.7a1.7 1.7 0 1 0 3.4 0a1.7 1.7 0 1 0-3.4 0zM540.1 331.5a1.7 1.7 0 1 0 3.4 0a1.7 1.7 0 1 0-3.4 0zM540.9 300.0a1.7 1.7 0 1 0 3.4 0a1.7 1.7 0 1 0-3.4 0zM545.7 313.3a1.7 1.7 0 1 0 3.4 0a1.7 1.7 0 1 0-3.4 0zM545.2 323.7a1.7 1.7 0 1 0 3.4 0a1.7 1.7 0 1 0-3.4 0zM546.1 329.5a1.7 1.7 0 1 0 3.4 0a1.7 1.7 0 1 0-3.4 0zM548.4 304.7a1.7 1.7 0 1 0 3.4 0a1.7 1.7 0 1 0-3.4 0zM544.1 334.0a1.7 1.7 0 1 0 3.4 0a1.7 1.7 0 1 0-3.4 0zM543.1 325.7a1.7 1.7 0 1 0 3.4 0a1.7 1.7 0 1 0-3.4 0zM544.1 314.6a1.7 1.7 0 1 0 3.4 0a1.7 1.7 0 1 0-3.4 0zM549.0 326.3a1.7 1.7 0 1 0 3.4 0a1.7 1.7 0 1 0-3.4 0zM543.6 325.3a1.7 1.7 0 1 0 3.4 0a1.7 1.7 0 1 0-3.4 0zM540.4 312.2a1.7 1.7 0 1 0 3.4 0a1.7 1.7 0 1 0-3.4 0zM547.0 318.3a1.7 1.7 0 1 0 3.4 0a1.7 1.7 0 1 0-3.4 0zM541.1 321.6a1.7 1.7 0 1 0 3.4 0a1.7 1.7 0 1 0-3.4 0zM545.3 328.3a1.7 1.7 0 1 0 3.4 0a1.7 1.7 0 1 0-3.4 0zM547.2 315.8a1.7 1.7 0 1 0 3.4 0a1.7 1.7 0 1 0-3.4 0zM542.8 316.9a1.7 1.7 0 1 0 3.4 0a1.7 1.7 0 1 0-3.4 0zM543.6 329.7a1.7 1.7 0 1 0 3.4 0a1.7 1.7 0 1 0-3.4 0zM549.1 328.9a1.7 1.7 0 1 0 3.4 0a1.7 1.7 0 1 0-3.4 0zM545.4 316.0a1.7 1.7 0 1 0 3.4 0a1.7 1.7 0 1 0-3.4 0zM547.0 315.2a1.7 1.7 0 1 0 3.4 0a1.7 1.7 0 1 0-3.4 0zM545.0 304.7a1.7 1.7 0 1 0 3.4 0a1.7 1.7 0 1 0-3.4 0zM543.0 329.5a1.7 1.7 0 1 0 3.4 0a1.7 1.7 0 1 0-3.4 0zM541.2 306.1a1.7 1.7 0 1 0 3.4 0a1.7 1.7 0 1 0-3.4 0zM543.8 331.3a1.7 1.7 0 1 0 3.4 0a1.7 1.7 0 1 0-3.4 0zM548.7 315.1a1.7 1.7 0 1 0 3.4 0a1.7 1.7 0 1 0-3.4 0z" fill="#de10d8"/>
</g></svg>
<div class="a" style="left:579px;top:60px;width:57.5px;height:18.5px;border:1px solid #e8e8e8;border-top-color:#555;border-left-color:#666;border-bottom:1.5px solid #555;background:#e8e8e8"></div>
<div class="t" style="left:580.7px;top:62.8px;font-size:6.15px;font-weight:bold;color:#111">U.S. States</div>
<div class="t" style="left:580.7px;top:70.5px;font-size:5.8px;font-weight:bold;color:#111">Name</div>
<div class="a" style="left:579px;top:79.5px;width:57px;height:338px;overflow:hidden;background:#e8e8e8;border-right:1px solid #aaa">
<div class="st" style="left:2px;top:1.40px">Alabama</div>
<div class="st" style="left:2px;top:8.85px">Alaska</div>
<div class="st" style="left:2px;top:16.30px">Arizona</div>
<div class="st" style="left:2px;top:23.76px">Arkansas</div>
<div class="st" style="left:2px;top:31.21px">California</div>
<div class="st" style="left:2px;top:38.66px">Colorado</div>
<div class="st" style="left:2px;top:46.11px">Connecticut</div>
<div class="st" style="left:2px;top:53.56px">Delaware</div>
<div class="st" style="left:2px;top:61.02px">District of Columbia</div>
<div class="st" style="left:2px;top:68.47px">Florida</div>
<div class="st" style="left:2px;top:75.92px">Georgia</div>
<div class="st" style="left:2px;top:83.37px">Hawaii</div>
<div class="st" style="left:2px;top:90.82px">Idaho</div>
<div class="st" style="left:2px;top:98.28px">Illinois</div>
<div class="st" style="left:2px;top:105.73px">Indiana</div>
<div class="st" style="left:2px;top:113.18px">Iowa</div>
<div class="st" style="left:2px;top:120.63px">Kansas</div>
<div class="st" style="left:2px;top:128.08px">Kentucky</div>
<div class="st" style="left:2px;top:135.54px">Louisiana</div>
<div class="st" style="left:2px;top:142.99px">Maine</div>
<div class="st" style="left:2px;top:150.44px">Maryland</div>
<div class="st" style="left:2px;top:157.89px">Massachusetts</div>
<div class="st" style="left:2px;top:165.34px">Michigan</div>
<div class="st" style="left:2px;top:172.80px">Minnesota</div>
<div class="st" style="left:2px;top:180.25px">Mississippi</div>
<div class="st" style="left:2px;top:187.70px">Missouri</div>
<div class="st" style="left:2px;top:195.15px">Montana</div>
<div class="st" style="left:2px;top:202.60px">Nebraska</div>
<div class="st" style="left:2px;top:210.06px">Nevada</div>
<div class="st" style="left:2px;top:217.51px">New Hampshire</div>
<div class="st" style="left:2px;top:224.96px">New Jersey</div>
<div class="st" style="left:2px;top:232.41px">New Mexico</div>
<div class="st" style="left:2px;top:239.86px">New York</div>
<div class="st" style="left:2px;top:247.32px">North Carolina</div>
<div class="st" style="left:2px;top:254.77px">North Dakota</div>
<div class="st" style="left:2px;top:262.22px">Ohio</div>
<div class="st" style="left:2px;top:269.67px">Oklahoma</div>
<div class="st" style="left:2px;top:277.12px">Oregon</div>
<div class="st" style="left:2px;top:284.58px">Pennsylvania</div>
<div class="st" style="left:2px;top:292.03px">Rhode Island</div>
<div class="st" style="left:2px;top:299.48px">South Carolina</div>
<div class="st" style="left:2px;top:306.93px">South Dakota</div>
<div class="st" style="left:2px;top:314.38px">Tennessee</div>
<div class="st" style="left:2px;top:321.84px">Texas</div>
<div class="st" style="left:2px;top:329.29px">Utah</div>
<div class="st" style="left:2px;top:336.74px">Vermont</div>
<div class="a" style="left:48.5px;top:0;width:8px;height:338px;background:#ececec;border-left:1px solid #d0d0d0"></div>
<div class="a" style="left:49.5px;top:1px;width:6.5px;height:321px;border-radius:3.2px;background:linear-gradient(90deg,#d8d8d8,#f8f8f8 35%,#fff 60%,#e0e0e0);border:.5px solid #c4c4c4"></div>
<div class="a" style="left:49.5px;top:2px;width:6.5px;height:282.5px;border-radius:3.2px;background:linear-gradient(90deg,#4a88e6,#a8ccfa 40%,#86b6f6 60%,#4080e0);border:.5px solid #4a78c8"></div>
<div class="a" style="left:49px;top:322px;width:7.5px;height:16px;background:#f4f4f4;border-top:1px solid #bbb"></div>
<div class="a" style="left:51px;top:323.6px;width:0;height:0;border:2px solid transparent;border-top:0;border-bottom:3px solid #111"></div>
<div class="a" style="left:51px;top:332.5px;width:0;height:0;border:2px solid transparent;border-bottom:0;border-top:3px solid #111"></div>
</div>
<div class="a" style="left:576px;top:227px;width:0;height:0;border:1.3px solid transparent;border-left:1.8px solid #222"></div>
<div class="a" style="left:416px;top:421px;width:0;height:0;border:1.3px solid transparent;border-bottom:1.8px solid #222"></div>
<div class="t" style="left:249.8px;top:438.4px;font-size:6.7px;font-weight:bold;color:#111">Cursor Location:</div>
<div class="t" style="left:307px;top:438.2px;font-size:7px;-webkit-text-stroke:.2px #111;color:#111">87.4418° W, 29.3361° N</div>
<div class="t" style="left:388.6px;top:438.4px;font-size:6.6px;font-weight:bold;color:#111">Projection:</div>
<div class="dd" style="top:434.8px;left:427.5px;width:107px;height:10.5px"><span style="left:6px;top:1.7px;font-size:5.75px">Match land_cover.TIFF</span><i></i></div>
<div class="t" style="left:544.6px;top:438.4px;font-size:6.7px;font-weight:bold;color:#111">Scale 1 :</div>
<div class="a" style="left:576px;top:435px;width:58.3px;height:11.2px;background:#fff;border:1px solid #c4c4c4;border-top-color:#aaa"></div>
<div class="t" style="left:578.5px;top:438.2px;font-size:7.3px;color:#111">3,627,064</div>
<svg class="a" style="left:636px;top:441px;width:7px;height:7px" viewBox="0 0 7 7"><path d="M6.5 1 1 6.5M6.5 3.2 3.2 6.5M6.5 5.2 5.2 6.5" stroke="#999" stroke-width=".7"/></svg>
</body></html>
